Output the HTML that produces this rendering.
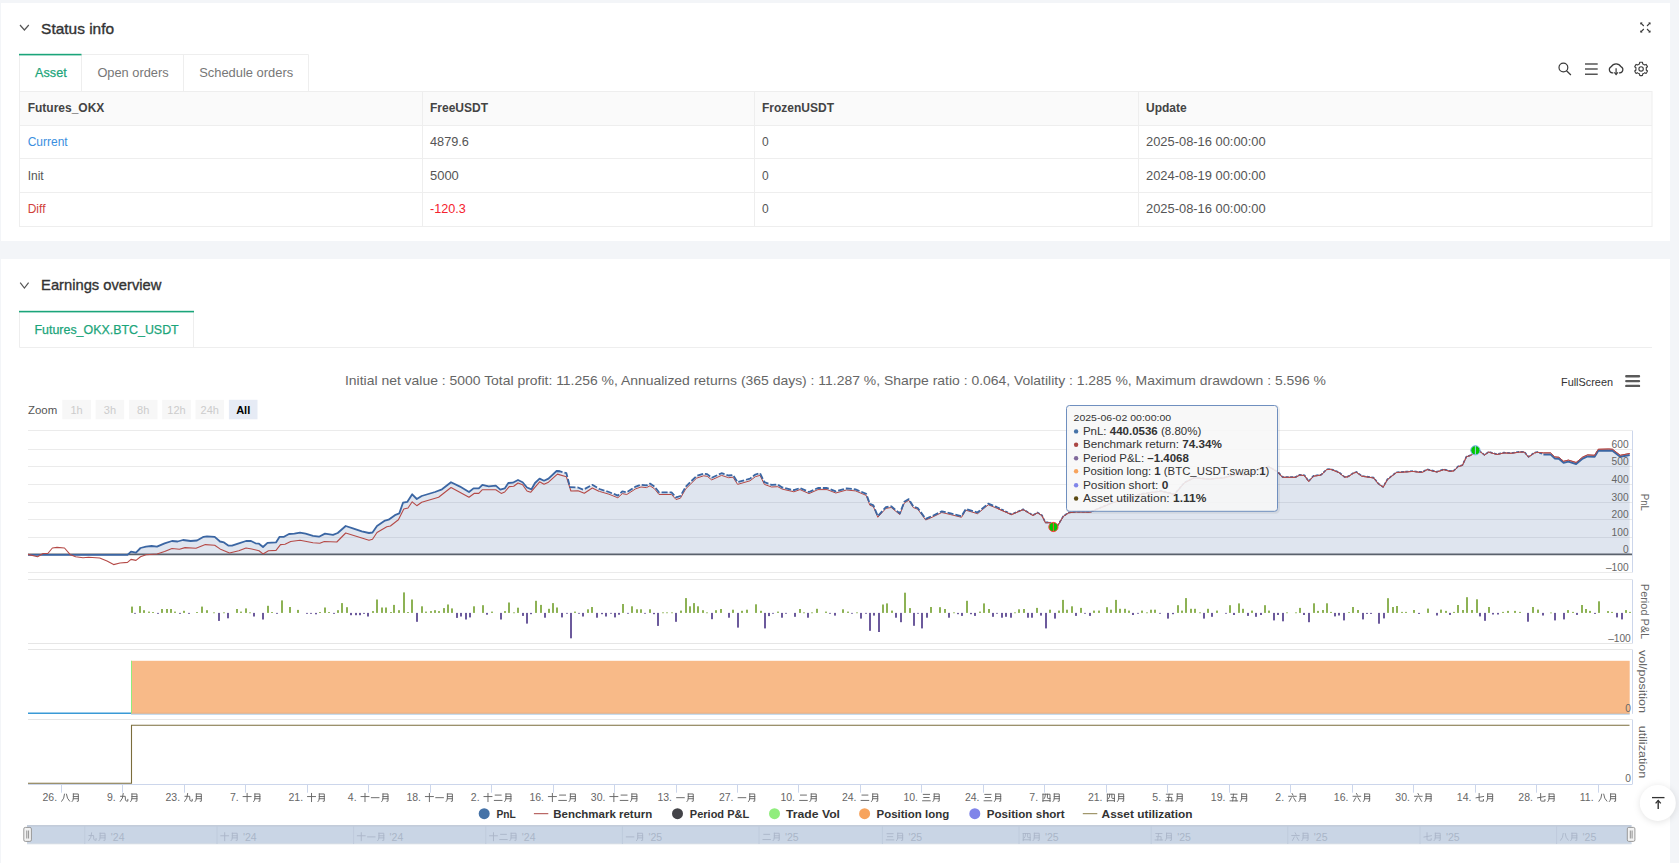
<!DOCTYPE html>
<html><head><meta charset="utf-8"><title>Status</title>
<style>html,body{margin:0;padding:0;width:1679px;height:863px;overflow:hidden;background:#f3f5f8;font-family:'Liberation Sans', sans-serif}</style>
</head><body>
<svg width="1679" height="863" viewBox="0 0 1679 863" style="position:absolute;left:0;top:0;font-family:'Liberation Sans', sans-serif">
<rect x="0" y="0" width="1679" height="863" fill="#f3f5f8"/>
<rect x="1" y="3" width="1669" height="238" fill="#fff"/>
<rect x="1" y="259" width="1669" height="604" fill="#fff"/>
<path d="M20,25 L24.4,30 L28.8,25" fill="none" stroke="#555" stroke-width="1.2"/>
<text x="41.1" y="34.25" font-size="15" fill="#333" font-weight="normal" text-anchor="start" textLength="73" lengthAdjust="spacingAndGlyphs" stroke="#333" stroke-width="0.35">Status info</text>
<g stroke="#3a3a3a" stroke-width="1.1" fill="none"><path d="M1640.8,23 L1643.8,26"/><path d="M1650,23 L1647,26"/><path d="M1640.8,32 L1643.8,29"/><path d="M1650,32 L1647,29"/></g>
<g fill="#3a3a3a"><path d="M1640.2,22.4 L1642.6,22.6 L1640.4,24.8z"/><path d="M1650.6,22.4 L1648.2,22.6 L1650.4,24.8z"/><path d="M1640.2,32.6 L1640.4,30.2 L1642.6,32.4z"/><path d="M1650.6,32.6 L1650.4,30.2 L1648.2,32.4z"/></g>
<g fill="none" stroke="#eeeeee" stroke-width="1"><path d="M19.5,91 V54.5 H308.5 V91"/><path d="M81.5,54.5 V91"/><path d="M183.5,54.5 V91"/></g>
<rect x="19" y="53.8" width="62.5" height="1.6" fill="#1ba57a"/>
<text x="35.1" y="76.8" font-size="13" fill="#1ba57a" font-weight="normal" text-anchor="start" textLength="31.6" lengthAdjust="spacingAndGlyphs" stroke="#1ba57a" stroke-width="0.25">Asset</text>
<text x="97.4" y="76.8" font-size="13" fill="#777" font-weight="normal" text-anchor="start" textLength="71.2" lengthAdjust="spacingAndGlyphs" >Open orders</text>
<text x="199.2" y="76.8" font-size="13" fill="#777" font-weight="normal" text-anchor="start" textLength="94" lengthAdjust="spacingAndGlyphs" >Schedule orders</text>
<g fill="none" stroke="#3a3a3a" stroke-width="1.2"><circle cx="1563.4" cy="67.5" r="4.4"/><path d="M1566.5,70.7 L1570.9,75"/><path d="M1585,64.1 H1597.7 M1585,69.1 H1597.7 M1585,74.2 H1597.7" stroke="#555" stroke-width="1.5"/><path d="M1613.3,72.9 L1612.3,72.9 A3.3,3.3 0 0 1 1611.3,66.6 A5.5,5.5 0 0 1 1620.9,66.6 A3.3,3.3 0 0 1 1619.9,72.9 L1618.9,72.9"/><path d="M1616.1,68.2 V74.3"/><path d="M1614.4,72.3 L1616.1,74.5 L1617.8,72.3"/></g>
<path d="M1641.1,62.2 L1641.8,62.2 L1642.5,62.3 L1642.7,64.0 L1643.2,64.1 L1643.7,64.4 L1644.2,64.7 L1644.6,65.0 L1646.1,64.4 L1646.5,65.0 L1646.9,65.6 L1647.2,66.2 L1647.5,66.8 L1646.2,67.8 L1646.3,68.4 L1646.3,68.9 L1646.3,69.4 L1646.2,70.0 L1647.5,71.0 L1647.2,71.6 L1646.9,72.2 L1646.5,72.8 L1646.1,73.4 L1644.6,72.8 L1644.2,73.1 L1643.7,73.4 L1643.2,73.7 L1642.7,73.8 L1642.5,75.5 L1641.8,75.6 L1641.1,75.6 L1640.4,75.6 L1639.7,75.5 L1639.5,73.8 L1639.0,73.7 L1638.5,73.4 L1638.0,73.1 L1637.6,72.8 L1636.1,73.4 L1635.7,72.8 L1635.3,72.3 L1635.0,71.6 L1634.7,71.0 L1636.0,70.0 L1635.9,69.4 L1635.9,68.9 L1635.9,68.4 L1636.0,67.8 L1634.7,66.8 L1635.0,66.2 L1635.3,65.6 L1635.7,65.0 L1636.1,64.4 L1637.6,65.0 L1638.0,64.7 L1638.5,64.4 L1639.0,64.1 L1639.5,64.0 L1639.7,62.3 L1640.4,62.2Z" fill="none" stroke="#3a3a3a" stroke-width="1.1" stroke-linejoin="round"/>
<circle cx="1641.1" cy="68.9" r="2.2" fill="none" stroke="#3a3a3a" stroke-width="1.1"/>
<rect x="19.5" y="91.5" width="1632.5" height="34" fill="#fafafa"/>
<g stroke="#eeeeee" stroke-width="1" fill="none"><rect x="19.5" y="91.5" width="1632.5" height="135"/><path d="M19.5,125.5 H1652 M19.5,158.5 H1652 M19.5,192.5 H1652"/><path d="M422.5,91.5 V226.5 M754.5,91.5 V226.5 M1138.5,91.5 V226.5"/></g>
<text x="27.7" y="112.4" font-size="12" fill="#444" font-weight="bold" text-anchor="start" >Futures_OKX</text>
<text x="430" y="112.4" font-size="12" fill="#444" font-weight="bold" text-anchor="start" >FreeUSDT</text>
<text x="762" y="112.4" font-size="12" fill="#444" font-weight="bold" text-anchor="start" >FrozenUSDT</text>
<text x="1146" y="112.4" font-size="12" fill="#444" font-weight="bold" text-anchor="start" >Update</text>
<text x="27.7" y="146" font-size="12" fill="#3b8fe0" font-weight="normal" text-anchor="start" >Current</text>
<text x="430" y="146" font-size="12" fill="#555" font-weight="normal" text-anchor="start" textLength="38.9" lengthAdjust="spacingAndGlyphs" >4879.6</text>
<text x="762" y="146" font-size="12" fill="#555" font-weight="normal" text-anchor="start" >0</text>
<text x="1146" y="146" font-size="12" fill="#555" font-weight="normal" text-anchor="start" textLength="119.7" lengthAdjust="spacingAndGlyphs" >2025-08-16 00:00:00</text>
<text x="27.7" y="180" font-size="12" fill="#555" font-weight="normal" text-anchor="start" >Init</text>
<text x="430" y="180" font-size="12" fill="#555" font-weight="normal" text-anchor="start" textLength="28.8" lengthAdjust="spacingAndGlyphs" >5000</text>
<text x="762" y="180" font-size="12" fill="#555" font-weight="normal" text-anchor="start" >0</text>
<text x="1146" y="180" font-size="12" fill="#555" font-weight="normal" text-anchor="start" textLength="119.7" lengthAdjust="spacingAndGlyphs" >2024-08-19 00:00:00</text>
<text x="27.7" y="213.1" font-size="12" fill="#d0413b" font-weight="normal" text-anchor="start" >Diff</text>
<text x="430" y="213.1" font-size="12" fill="#f5222d" font-weight="normal" text-anchor="start" textLength="35.8" lengthAdjust="spacingAndGlyphs" >-120.3</text>
<text x="762" y="213.1" font-size="12" fill="#555" font-weight="normal" text-anchor="start" >0</text>
<text x="1146" y="213.1" font-size="12" fill="#555" font-weight="normal" text-anchor="start" textLength="119.7" lengthAdjust="spacingAndGlyphs" >2025-08-16 00:00:00</text>
<path d="M20.2,282.6 L24.4,288 L28.6,282.6" fill="none" stroke="#555" stroke-width="1.2"/>
<text x="41.1" y="289.7" font-size="15" fill="#333" font-weight="normal" text-anchor="start" textLength="120.3" lengthAdjust="spacingAndGlyphs" stroke="#333" stroke-width="0.35">Earnings overview</text>
<g fill="none" stroke="#eeeeee" stroke-width="1"><path d="M19.5,347.5 V311.5 H193.5 V347.5"/><path d="M19.5,347.5 H1652"/></g>
<rect x="19" y="310.8" width="175" height="1.6" fill="#1ba57a"/>
<text x="34.5" y="334.1" font-size="13" fill="#1ba57a" font-weight="normal" text-anchor="start" textLength="144.2" lengthAdjust="spacingAndGlyphs" stroke="#1ba57a" stroke-width="0.25">Futures_OKX.BTC_USDT</text>
<text x="345" y="385.1" font-size="13" fill="#666" font-weight="normal" text-anchor="start" textLength="981" lengthAdjust="spacingAndGlyphs" >Initial net value : 5000 Total profit: 11.256 %, Annualized returns (365 days) : 11.287 %, Sharpe ratio : 0.064, Volatility : 1.285 %, Maximum drawdown : 5.596 %</text>
<text x="1561" y="386.3" font-size="11.5" fill="#333" font-weight="normal" text-anchor="start" textLength="52" lengthAdjust="spacingAndGlyphs" >FullScreen</text>
<g stroke="#5a5a5a" stroke-width="2.4" stroke-linecap="round"><path d="M1626.3,376.3 H1639 M1626.3,381.1 H1639 M1626.3,385.9 H1639"/></g>
<text x="28" y="413.8" font-size="11.5" fill="#555" font-weight="normal" text-anchor="start" textLength="29.2" lengthAdjust="spacingAndGlyphs" >Zoom</text>
<rect x="62.3" y="399.8" width="28.6" height="19.5" fill="#f7f7f7"/>
<text x="76.6" y="414" font-size="11" fill="#ccc" font-weight="normal" text-anchor="middle" >1h</text>
<rect x="95.6" y="399.8" width="28.6" height="19.5" fill="#f7f7f7"/>
<text x="109.89999999999999" y="414" font-size="11" fill="#ccc" font-weight="normal" text-anchor="middle" >3h</text>
<rect x="128.9" y="399.8" width="28.6" height="19.5" fill="#f7f7f7"/>
<text x="143.20000000000002" y="414" font-size="11" fill="#ccc" font-weight="normal" text-anchor="middle" >8h</text>
<rect x="162.2" y="399.8" width="28.6" height="19.5" fill="#f7f7f7"/>
<text x="176.5" y="414" font-size="11" fill="#ccc" font-weight="normal" text-anchor="middle" >12h</text>
<rect x="195.5" y="399.8" width="28.6" height="19.5" fill="#f7f7f7"/>
<text x="209.8" y="414" font-size="11" fill="#ccc" font-weight="normal" text-anchor="middle" >24h</text>
<rect x="228.9" y="399.8" width="28.6" height="19.5" fill="#e6ebf5"/>
<text x="243.20000000000002" y="414" font-size="11" fill="#000" font-weight="bold" text-anchor="middle" >All</text>
<g stroke="#ebebeb" stroke-width="1">
<path d="M28,449.5 H1632"/>
<path d="M28,466.5 H1632"/>
<path d="M28,484.5 H1632"/>
<path d="M28,502.5 H1632"/>
<path d="M28,519.5 H1632"/>
<path d="M28,537.5 H1632"/>
<path d="M28,572.5 H1632"/>
<path d="M28,430.5 H1632"/>
</g>
<path d="M28.0,554.8 L127.5,554.8 L131.0,551.6 L136.0,552.6 L140.5,548.0 L146.0,546.6 L151.6,546.0 L157.0,546.6 L164.6,543.3 L172.0,541.0 L177.6,541.5 L183.0,540.0 L190.6,541.0 L197.0,540.5 L203.6,536.8 L207.0,536.3 L214.7,536.8 L220.0,541.5 L224.0,542.4 L228.6,545.7 L232.0,545.7 L238.8,543.3 L246.0,541.0 L251.0,541.0 L255.5,543.3 L259.0,543.7 L263.0,547.0 L267.5,542.8 L276.0,542.4 L279.6,536.8 L284.0,536.8 L289.0,534.0 L294.4,533.7 L300.0,532.6 L305.6,533.7 L313.0,535.9 L319.0,536.7 L325.0,533.6 L333.0,534.9 L337.7,533.0 L345.7,526.0 L352.9,528.3 L361.8,531.3 L369.0,533.0 L372.5,532.5 L377.0,526.0 L385.0,520.6 L388.6,519.7 L394.9,515.2 L399.3,513.4 L403.0,502.7 L407.4,501.8 L412.2,494.3 L416.8,499.0 L421.7,496.0 L435.0,492.0 L442.0,489.3 L451.0,482.2 L460.0,486.6 L469.0,492.0 L473.5,488.4 L478.8,488.4 L482.4,484.8 L488.7,486.3 L495.8,485.7 L500.3,489.7 L504.7,488.4 L508.3,483.0 L512.8,482.7 L518.0,480.0 L522.6,482.2 L527.0,487.5 L531.5,489.3 L535.0,483.0 L539.6,478.6 L544.0,480.7 L548.5,478.6 L556.6,471.0 L560.0,471.4 L566.4,473.2 L570.0,487.2 L578.0,487.5 L583.4,489.7 L592.3,484.8 L599.4,489.0 L608.9,492.0 L617.9,495.6 L622.3,491.4 L626.8,492.3 L635.7,486.6 L641.0,484.8 L646.5,485.4 L650.0,483.6 L654.5,486.6 L659.0,492.3 L671.5,492.3 L676.0,497.3 L680.4,496.0 L685.8,486.6 L696.5,476.0 L703.6,473.6 L707.2,474.1 L711.7,477.7 L721.5,473.2 L728.6,475.5 L733.0,475.0 L737.6,482.2 L750.0,478.6 L755.4,474.5 L760.0,473.2 L764.4,482.2 L771.5,484.8 L777.8,484.5 L782.2,487.5 L793.9,490.2 L800.0,488.0 L809.0,492.0 L818.0,488.0 L827.0,488.0 L835.8,491.4 L846.6,488.4 L855.5,489.3 L866.2,493.8 L869.8,503.6 L873.4,505.4 L877.8,516.1 L885.9,507.2 L891.2,506.3 L899.8,513.4 L904.3,501.8 L908.8,499.1 L913.2,506.3 L917.7,508.0 L925.7,518.8 L932.9,515.7 L941.8,511.3 L950.7,513.4 L961.5,516.1 L965.9,509.0 L977.5,512.5 L988.3,503.6 L997.2,507.2 L1011.5,514.3 L1023.1,509.3 L1033.0,515.2 L1037.4,512.5 L1041.9,515.2 L1045.4,522.4 L1049.9,522.4 L1053.5,526.8 L1058.0,525.0 L1063.3,516.1 L1068.7,512.5 L1075.8,511.6 L1090.4,511.8 L1112.3,502.6 L1140.8,494.0 L1161.0,490.8 L1174.5,494.2 L1184.5,482.4 L1194.6,477.4 L1208.0,479.0 L1224.9,477.4 L1236.6,474.0 L1246.7,474.8 L1258.5,469.0 L1268.6,466.4 L1277.7,471.7 L1282.5,477.0 L1295.6,477.0 L1299.8,474.7 L1304.5,475.3 L1308.7,481.2 L1313.5,475.9 L1321.2,474.7 L1326.6,469.3 L1330.8,469.0 L1339.0,472.3 L1344.4,476.8 L1348.0,476.5 L1353.4,472.9 L1356.4,471.9 L1361.7,475.9 L1373.6,477.6 L1378.4,483.6 L1383.2,486.9 L1387.3,479.4 L1396.3,472.3 L1413.0,471.1 L1418.9,471.9 L1422.5,471.9 L1427.2,469.3 L1436.8,471.7 L1443.9,469.3 L1449.9,471.1 L1454.0,470.5 L1458.2,466.3 L1462.4,465.1 L1466.5,456.4 L1471.3,455.0 L1475.5,449.5 L1479.0,450.3 L1484.4,454.8 L1488.6,451.8 L1497.0,454.2 L1504.0,452.6 L1511.2,453.0 L1519.6,451.8 L1524.3,451.8 L1528.5,456.8 L1534.5,452.6 L1537.4,452.0 L1543.4,454.4 L1550.5,454.4 L1554.7,458.4 L1558.9,458.8 L1563.6,462.8 L1568.4,461.6 L1576.1,464.0 L1582.7,458.6 L1587.5,456.4 L1594.6,456.8 L1598.2,450.8 L1608.9,450.5 L1612.5,450.8 L1620.2,456.8 L1629.7,455.0 L1629.7,554.5 L28.0,554.5Z" fill="#c5d0e2" fill-opacity="0.55"/>
<clipPath id="ac"><path d="M28.0,554.8 L127.5,554.8 L131.0,551.6 L136.0,552.6 L140.5,548.0 L146.0,546.6 L151.6,546.0 L157.0,546.6 L164.6,543.3 L172.0,541.0 L177.6,541.5 L183.0,540.0 L190.6,541.0 L197.0,540.5 L203.6,536.8 L207.0,536.3 L214.7,536.8 L220.0,541.5 L224.0,542.4 L228.6,545.7 L232.0,545.7 L238.8,543.3 L246.0,541.0 L251.0,541.0 L255.5,543.3 L259.0,543.7 L263.0,547.0 L267.5,542.8 L276.0,542.4 L279.6,536.8 L284.0,536.8 L289.0,534.0 L294.4,533.7 L300.0,532.6 L305.6,533.7 L313.0,535.9 L319.0,536.7 L325.0,533.6 L333.0,534.9 L337.7,533.0 L345.7,526.0 L352.9,528.3 L361.8,531.3 L369.0,533.0 L372.5,532.5 L377.0,526.0 L385.0,520.6 L388.6,519.7 L394.9,515.2 L399.3,513.4 L403.0,502.7 L407.4,501.8 L412.2,494.3 L416.8,499.0 L421.7,496.0 L435.0,492.0 L442.0,489.3 L451.0,482.2 L460.0,486.6 L469.0,492.0 L473.5,488.4 L478.8,488.4 L482.4,484.8 L488.7,486.3 L495.8,485.7 L500.3,489.7 L504.7,488.4 L508.3,483.0 L512.8,482.7 L518.0,480.0 L522.6,482.2 L527.0,487.5 L531.5,489.3 L535.0,483.0 L539.6,478.6 L544.0,480.7 L548.5,478.6 L556.6,471.0 L560.0,471.4 L566.4,473.2 L570.0,487.2 L578.0,487.5 L583.4,489.7 L592.3,484.8 L599.4,489.0 L608.9,492.0 L617.9,495.6 L622.3,491.4 L626.8,492.3 L635.7,486.6 L641.0,484.8 L646.5,485.4 L650.0,483.6 L654.5,486.6 L659.0,492.3 L671.5,492.3 L676.0,497.3 L680.4,496.0 L685.8,486.6 L696.5,476.0 L703.6,473.6 L707.2,474.1 L711.7,477.7 L721.5,473.2 L728.6,475.5 L733.0,475.0 L737.6,482.2 L750.0,478.6 L755.4,474.5 L760.0,473.2 L764.4,482.2 L771.5,484.8 L777.8,484.5 L782.2,487.5 L793.9,490.2 L800.0,488.0 L809.0,492.0 L818.0,488.0 L827.0,488.0 L835.8,491.4 L846.6,488.4 L855.5,489.3 L866.2,493.8 L869.8,503.6 L873.4,505.4 L877.8,516.1 L885.9,507.2 L891.2,506.3 L899.8,513.4 L904.3,501.8 L908.8,499.1 L913.2,506.3 L917.7,508.0 L925.7,518.8 L932.9,515.7 L941.8,511.3 L950.7,513.4 L961.5,516.1 L965.9,509.0 L977.5,512.5 L988.3,503.6 L997.2,507.2 L1011.5,514.3 L1023.1,509.3 L1033.0,515.2 L1037.4,512.5 L1041.9,515.2 L1045.4,522.4 L1049.9,522.4 L1053.5,526.8 L1058.0,525.0 L1063.3,516.1 L1068.7,512.5 L1075.8,511.6 L1090.4,511.8 L1112.3,502.6 L1140.8,494.0 L1161.0,490.8 L1174.5,494.2 L1184.5,482.4 L1194.6,477.4 L1208.0,479.0 L1224.9,477.4 L1236.6,474.0 L1246.7,474.8 L1258.5,469.0 L1268.6,466.4 L1277.7,471.7 L1282.5,477.0 L1295.6,477.0 L1299.8,474.7 L1304.5,475.3 L1308.7,481.2 L1313.5,475.9 L1321.2,474.7 L1326.6,469.3 L1330.8,469.0 L1339.0,472.3 L1344.4,476.8 L1348.0,476.5 L1353.4,472.9 L1356.4,471.9 L1361.7,475.9 L1373.6,477.6 L1378.4,483.6 L1383.2,486.9 L1387.3,479.4 L1396.3,472.3 L1413.0,471.1 L1418.9,471.9 L1422.5,471.9 L1427.2,469.3 L1436.8,471.7 L1443.9,469.3 L1449.9,471.1 L1454.0,470.5 L1458.2,466.3 L1462.4,465.1 L1466.5,456.4 L1471.3,455.0 L1475.5,449.5 L1479.0,450.3 L1484.4,454.8 L1488.6,451.8 L1497.0,454.2 L1504.0,452.6 L1511.2,453.0 L1519.6,451.8 L1524.3,451.8 L1528.5,456.8 L1534.5,452.6 L1537.4,452.0 L1543.4,454.4 L1550.5,454.4 L1554.7,458.4 L1558.9,458.8 L1563.6,462.8 L1568.4,461.6 L1576.1,464.0 L1582.7,458.6 L1587.5,456.4 L1594.6,456.8 L1598.2,450.8 L1608.9,450.5 L1612.5,450.8 L1620.2,456.8 L1629.7,455.0 L1629.7,554.5 L28.0,554.5Z"/></clipPath>
<g stroke="#c8cfdb" stroke-width="1" stroke-opacity="0.6" clip-path="url(#ac)">
<path d="M28,466.5 H1630"/>
<path d="M28,484.5 H1630"/>
<path d="M28,502.5 H1630"/>
<path d="M28,519.5 H1630"/>
<path d="M28,537.5 H1630"/>
</g>
<path d="M28,554.3 H1632" stroke="#5a616c" stroke-width="1.7"/>
<path d="M599.4,491.4 L608.9,494.2 L617.9,497.8 L622.3,493.6 L626.8,494.5 L635.7,488.8 L641.0,487.0 L646.5,487.6 L650.0,485.8 L654.5,488.8 L659.0,494.5 L671.5,494.5 L676.0,499.5 L680.4,498.2 L685.8,488.8 L696.5,478.2 L703.6,475.8 L707.2,476.3 L711.7,479.9 L721.5,475.4 L728.6,477.7 L733.0,477.2 L737.6,484.4 L750.0,480.8 L755.4,476.7 L760.0,475.4 L764.4,484.4 L771.5,487.0 L777.8,486.7 L782.2,489.1 L793.9,491.8 L800.0,489.6 L809.0,493.6 L818.0,489.6 L827.0,489.6 L835.8,493.0 L846.6,490.0 L855.5,490.9 L866.2,495.4 L869.8,505.2 L873.4,506.6 L877.8,517.3 L885.9,508.4 L891.2,507.5 L899.8,514.6 L904.3,503.0 L908.8,500.3 L913.2,507.5 L917.7,509.2 L925.7,520.0 L932.9,516.9 L941.8,512.5 L950.7,514.6 L961.5,517.3 L965.9,510.2 L977.5,513.7 L988.3,504.8 L997.2,508.4 L1011.5,514.6 L1023.1,509.6 L1033.0,515.5 L1037.4,512.8 L1041.9,515.5 L1045.4,522.7 L1049.9,522.7 L1053.5,527.1 L1058.0,525.3 L1063.3,516.4 L1068.7,512.8 L1075.8,511.9 L1090.4,512.1 L1112.3,502.9 L1140.8,494.3 L1161.0,491.1 L1174.5,494.5 L1184.5,482.7 L1194.6,477.7 L1208.0,479.3 L1224.9,477.7 L1236.6,474.3 L1246.7,475.1 L1258.5,469.3 L1268.6,466.7 L1277.7,472.0 L1282.5,477.3 L1295.6,477.3 L1299.8,475.0 L1304.5,475.6 L1308.7,481.5 L1313.5,476.2 L1321.2,475.0 L1326.6,469.6 L1330.8,469.3 L1339.0,472.6 L1344.4,477.1 L1348.0,476.8 L1353.4,473.2 L1356.4,472.2 L1361.7,476.2 L1373.6,477.9 L1378.4,483.9 L1383.2,487.2 L1387.3,479.7 L1396.3,472.6 L1413.0,471.4 L1418.9,472.2 L1422.5,472.2 L1427.2,469.6 L1436.8,472.0 L1443.9,469.6 L1449.9,471.4 L1454.0,470.8 L1458.2,466.6 L1462.4,465.4 L1466.5,456.7 L1471.3,455.3 L1475.5,449.8 L1479.0,450.6 L1484.4,455.1 L1488.6,452.1 L1497.0,454.5 L1504.0,452.9 L1511.2,453.3 L1519.6,452.1 L1524.3,452.1 L1528.5,457.1 L1534.5,452.9 L1537.4,452.3 L1543.4,452.9 L1550.5,452.9 L1554.7,456.9 L1558.9,457.3 L1563.6,461.3 L1568.4,460.1 L1576.1,462.5 L1582.7,457.1 L1587.5,454.9 L1594.6,455.3 L1598.2,449.3 L1608.9,449.0 L1612.5,449.3 L1620.2,455.3 L1629.7,453.5" fill="none" stroke="#b54a47" stroke-width="1" stroke-linejoin="round"/>
<path d="M28.0,554.8 L127.5,554.8 L131.0,551.6 L136.0,552.6 L140.5,548.0 L146.0,546.6 L151.6,546.0 L157.0,546.6 L164.6,543.3 L172.0,541.0 L177.6,541.5 L183.0,540.0 L190.6,541.0 L197.0,540.5 L203.6,536.8 L207.0,536.3 L214.7,536.8 L220.0,541.5 L224.0,542.4 L228.6,545.7 L232.0,545.7 L238.8,543.3 L246.0,541.0 L251.0,541.0 L255.5,543.3 L259.0,543.7 L263.0,547.0 L267.5,542.8 L276.0,542.4 L279.6,536.8 L284.0,536.8 L289.0,534.0 L294.4,533.7 L300.0,532.6 L305.6,533.7 L313.0,535.9 L319.0,536.7 L325.0,533.6 L333.0,534.9 L337.7,533.0 L345.7,526.0 L352.9,528.3 L361.8,531.3 L369.0,533.0 L372.5,532.5 L377.0,526.0 L385.0,520.6 L388.6,519.7 L394.9,515.2 L399.3,513.4 L403.0,502.7 L407.4,501.8 L412.2,494.3 L416.8,499.0 L421.7,496.0 L435.0,492.0 L442.0,489.3 L451.0,482.2 L460.0,486.6 L469.0,492.0 L473.5,488.4 L478.8,488.4 L482.4,484.8 L488.7,486.3 L495.8,485.7 L500.3,489.7 L504.7,488.4 L508.3,483.0 L512.8,482.7 L518.0,480.0 L522.6,482.2 L527.0,487.5 L531.5,489.3 L535.0,483.0 L539.6,478.6 L544.0,480.7 L548.5,478.6 L556.6,471.0 L560.0,471.4" fill="none" stroke="#3b66a3" stroke-width="1.8" stroke-linejoin="round"/>
<path d="M28.0,554.4 L37.6,556.7 L43.0,553.5 L47.8,553.5 L52.4,548.0 L57.0,547.4 L64.5,548.0 L70.0,554.4 L75.6,556.7 L83.0,557.8 L88.6,557.2 L99.7,558.0 L107.0,561.0 L113.6,564.6 L120.0,563.0 L127.5,562.4 L131.0,559.4 L136.0,560.4 L140.5,556.8 L146.0,554.8 L157.0,554.0 L164.6,551.6 L172.0,548.5 L179.5,549.2 L185.0,547.6 L196.0,548.3 L205.4,544.6 L214.7,545.2 L220.0,548.9 L229.5,553.0 L238.8,550.7 L246.0,548.0 L251.8,549.0 L259.0,550.7 L263.0,553.9 L268.5,550.7 L276.0,550.4 L280.5,544.6 L285.0,544.2 L290.7,541.5 L300.0,540.2 L313.0,542.8 L319.8,543.3 L324.3,541.5 L336.8,542.0 L345.7,533.0 L369.0,540.2 L372.5,539.3 L377.0,532.5 L386.8,526.8 L390.4,526.0 L398.4,519.7 L403.8,509.0 L408.0,508.0 L412.2,501.8 L416.8,505.7 L421.7,502.2 L438.6,497.3 L451.0,487.5 L469.0,497.3 L474.4,493.2 L478.8,493.4 L482.4,489.7 L495.8,489.7 L501.2,493.4 L504.7,492.0 L509.2,486.6 L513.7,486.3 L518.0,483.0 L522.6,484.8 L527.0,491.0 L530.6,492.3 L539.6,481.8 L544.0,484.3 L548.5,482.2 L557.4,474.1 L566.4,476.8 L570.9,491.0 L578.0,490.7 L584.3,493.2 L592.3,488.0 L599.4,491.4" fill="none" stroke="#b54a47" stroke-width="1.1" stroke-linejoin="round"/>
<path d="M556.6,471.0 L560.0,471.4 L566.4,473.2 L570.0,487.2 L578.0,487.5 L583.4,489.7 L592.3,484.8 L599.4,489.0 L608.9,492.0 L617.9,495.6 L622.3,491.4 L626.8,492.3 L635.7,486.6 L641.0,484.8 L646.5,485.4 L650.0,483.6 L654.5,486.6 L659.0,492.3 L671.5,492.3 L676.0,497.3 L680.4,496.0 L685.8,486.6 L696.5,476.0 L703.6,473.6 L707.2,474.1 L711.7,477.7 L721.5,473.2 L728.6,475.5 L733.0,475.0 L737.6,482.2 L750.0,478.6 L755.4,474.5 L760.0,473.2 L764.4,482.2 L771.5,484.8 L777.8,484.5 L782.2,487.5 L793.9,490.2 L800.0,488.0 L809.0,492.0 L818.0,488.0 L827.0,488.0 L835.8,491.4 L846.6,488.4 L855.5,489.3 L866.2,493.8 L869.8,503.6 L873.4,505.4 L877.8,516.1 L885.9,507.2 L891.2,506.3 L899.8,513.4 L904.3,501.8 L908.8,499.1 L913.2,506.3 L917.7,508.0 L925.7,518.8 L932.9,515.7 L941.8,511.3 L950.7,513.4 L961.5,516.1 L965.9,509.0 L977.5,512.5 L988.3,503.6 L997.2,507.2" fill="none" stroke="#3b66a3" stroke-width="1.8" stroke-dasharray="6,2" stroke-linejoin="round"/>
<path d="M997.2,507.2 L1011.5,514.3 L1023.1,509.3 L1033.0,515.2 L1037.4,512.5 L1041.9,515.2 L1045.4,522.4 L1049.9,522.4 L1053.5,526.8 L1058.0,525.0 L1063.3,516.1 L1068.7,512.5 L1075.8,511.6 L1090.4,511.8 L1112.3,502.6 L1140.8,494.0 L1161.0,490.8 L1174.5,494.2 L1184.5,482.4 L1194.6,477.4 L1208.0,479.0 L1224.9,477.4 L1236.6,474.0 L1246.7,474.8 L1258.5,469.0 L1268.6,466.4 L1277.7,471.7 L1282.5,477.0 L1295.6,477.0 L1299.8,474.7 L1304.5,475.3 L1308.7,481.2 L1313.5,475.9 L1321.2,474.7 L1326.6,469.3 L1330.8,469.0 L1339.0,472.3 L1344.4,476.8 L1348.0,476.5 L1353.4,472.9 L1356.4,471.9 L1361.7,475.9 L1373.6,477.6 L1378.4,483.6 L1383.2,486.9 L1387.3,479.4 L1396.3,472.3 L1413.0,471.1 L1418.9,471.9 L1422.5,471.9 L1427.2,469.3 L1436.8,471.7 L1443.9,469.3 L1449.9,471.1 L1454.0,470.5 L1458.2,466.3 L1462.4,465.1 L1466.5,456.4 L1471.3,455.0 L1475.5,449.5 L1479.0,450.3 L1484.4,454.8 L1488.6,451.8 L1497.0,454.2 L1504.0,452.6 L1511.2,453.0 L1519.6,451.8 L1524.3,451.8 L1528.5,456.8 L1534.5,452.6 L1537.4,452.0 L1543.4,454.4" fill="none" stroke="#3b66a3" stroke-width="1.6" stroke-dasharray="3,1.5" stroke-linejoin="round"/>
<path d="M1543.4,454.4 L1550.5,454.4 L1554.7,458.4 L1558.9,458.8 L1563.6,462.8 L1568.4,461.6 L1576.1,464.0 L1582.7,458.6 L1587.5,456.4 L1594.6,456.8 L1598.2,450.8 L1608.9,450.5 L1612.5,450.8 L1620.2,456.8 L1629.7,455.0" fill="none" stroke="#3b66a3" stroke-width="2" stroke-linejoin="round"/>
<path d="M997.2,508.4 L1011.5,514.6 L1023.1,509.6 L1033.0,515.5 L1037.4,512.8 L1041.9,515.5 L1045.4,522.7 L1049.9,522.7 L1053.5,527.1 L1058.0,525.3 L1063.3,516.4 L1068.7,512.8 L1075.8,511.9 L1090.4,512.1 L1112.3,502.9 L1140.8,494.3 L1161.0,491.1 L1174.5,494.5 L1184.5,482.7 L1194.6,477.7 L1208.0,479.3 L1224.9,477.7 L1236.6,474.3 L1246.7,475.1 L1258.5,469.3 L1268.6,466.7 L1277.7,472.0 L1282.5,477.3 L1295.6,477.3 L1299.8,475.0 L1304.5,475.6 L1308.7,481.5 L1313.5,476.2 L1321.2,475.0 L1326.6,469.6 L1330.8,469.3 L1339.0,472.6 L1344.4,477.1 L1348.0,476.8 L1353.4,473.2 L1356.4,472.2 L1361.7,476.2 L1373.6,477.9 L1378.4,483.9 L1383.2,487.2 L1387.3,479.7 L1396.3,472.6 L1413.0,471.4 L1418.9,472.2 L1422.5,472.2 L1427.2,469.6 L1436.8,472.0 L1443.9,469.6 L1449.9,471.4 L1454.0,470.8 L1458.2,466.6 L1462.4,465.4 L1466.5,456.7 L1471.3,455.3 L1475.5,449.8 L1479.0,450.6 L1484.4,455.1 L1488.6,452.1 L1497.0,454.5 L1504.0,452.9 L1511.2,453.3 L1519.6,452.1 L1524.3,452.1 L1528.5,457.1 L1534.5,452.9 L1537.4,452.3 L1543.4,452.9 L1550.5,452.9 L1554.7,456.9 L1558.9,457.3 L1563.6,461.3 L1568.4,460.1 L1576.1,462.5 L1582.7,457.1 L1587.5,454.9 L1594.6,455.3 L1598.2,449.3 L1608.9,449.0 L1612.5,449.3 L1620.2,455.3 L1629.7,453.5" fill="none" stroke="#b54a47" stroke-width="1" stroke-linejoin="round"/>
<path d="M1632.5,430.5 V572.5" stroke="#ccd6eb" stroke-width="1"/>
<text x="1628.6" y="447.5" font-size="10.2" fill="#666" font-weight="normal" text-anchor="end" >600</text>
<text x="1628.6" y="464.5" font-size="10.2" fill="#666" font-weight="normal" text-anchor="end" >500</text>
<text x="1628.6" y="482.5" font-size="10.2" fill="#666" font-weight="normal" text-anchor="end" >400</text>
<text x="1628.6" y="500.5" font-size="10.2" fill="#666" font-weight="normal" text-anchor="end" >300</text>
<text x="1628.6" y="517.5" font-size="10.2" fill="#666" font-weight="normal" text-anchor="end" >200</text>
<text x="1628.6" y="535.5" font-size="10.2" fill="#666" font-weight="normal" text-anchor="end" >100</text>
<text x="1628.6" y="552.5" font-size="10.2" fill="#666" font-weight="normal" text-anchor="end" >0</text>
<text x="1628.6" y="570.5" font-size="10.2" fill="#666" font-weight="normal" text-anchor="end" >&#8211;100</text>
<text transform="translate(1641.3,502.3) rotate(90)" font-size="10.3" fill="#666" text-anchor="middle" textLength="17.2" lengthAdjust="spacingAndGlyphs">PnL</text>
<circle cx="1053.4" cy="527" r="4.6" fill="#00c800" stroke="#ff4040" stroke-width="1"/><path d="M1053.4,522.5 V531.5" stroke="#ff4040" stroke-width="1"/>
<circle cx="1475.4" cy="450.3" r="4.6" fill="#00c800" stroke="#7fb2f0" stroke-width="1"/><path d="M1475.4,446 V454.8" stroke="#9fd0f0" stroke-width="1"/>
<path d="M28,579.5 H1632 M28,643.5 H1632" stroke="#e6e6e6" stroke-width="1"/>
<path d="M1632.5,579.5 V643.5" stroke="#ccd6eb" stroke-width="1"/>
<g>
<rect x="131" y="606.6" width="2" height="6.3" fill="#8db255"/>
<rect x="134" y="612.9" width="2" height="0.8" fill="#6c5a9c"/>
<rect x="139" y="606.1" width="2" height="6.8" fill="#8db255"/>
<rect x="143" y="610.2" width="2" height="2.7" fill="#8db255"/>
<rect x="148" y="611.6" width="2" height="1.3" fill="#8db255"/>
<rect x="152" y="612.0" width="2" height="0.9" fill="#8db255"/>
<rect x="157" y="612.9" width="2" height="0.9" fill="#6c5a9c"/>
<rect x="161" y="609.0" width="2" height="3.9" fill="#8db255"/>
<rect x="166" y="609.0" width="2" height="3.9" fill="#8db255"/>
<rect x="170" y="609.0" width="2" height="3.9" fill="#8db255"/>
<rect x="174" y="611.6" width="2" height="1.3" fill="#8db255"/>
<rect x="179" y="612.9" width="2" height="0.9" fill="#6c5a9c"/>
<rect x="183" y="610.8" width="2" height="2.1" fill="#8db255"/>
<rect x="188" y="612.9" width="2" height="0.9" fill="#6c5a9c"/>
<rect x="196" y="612.0" width="2" height="0.9" fill="#8db255"/>
<rect x="201" y="606.6" width="2" height="6.3" fill="#8db255"/>
<rect x="206" y="610.2" width="2" height="2.7" fill="#8db255"/>
<rect x="213" y="612.4" width="2" height="0.8" fill="#8db255"/>
<rect x="218" y="612.9" width="2" height="8.0" fill="#6c5a9c"/>
<rect x="223" y="612.4" width="2" height="0.8" fill="#8db255"/>
<rect x="227" y="612.9" width="2" height="5.4" fill="#6c5a9c"/>
<rect x="236" y="609.0" width="2" height="3.9" fill="#8db255"/>
<rect x="240" y="611.6" width="2" height="1.3" fill="#8db255"/>
<rect x="245" y="608.4" width="2" height="4.5" fill="#8db255"/>
<rect x="249" y="612.4" width="2" height="0.8" fill="#8db255"/>
<rect x="253" y="612.9" width="2" height="3.6" fill="#6c5a9c"/>
<rect x="262" y="612.9" width="2" height="6.6" fill="#6c5a9c"/>
<rect x="267" y="605.8" width="2" height="7.1" fill="#8db255"/>
<rect x="271" y="612.0" width="2" height="0.9" fill="#8db255"/>
<rect x="276" y="612.9" width="2" height="0.9" fill="#6c5a9c"/>
<rect x="281" y="600.4" width="2" height="12.5" fill="#8db255"/>
<rect x="289" y="607.0" width="2" height="5.9" fill="#8db255"/>
<rect x="297" y="609.9" width="2" height="3.0" fill="#8db255"/>
<rect x="306" y="612.9" width="2" height="0.9" fill="#6c5a9c"/>
<rect x="310" y="612.9" width="2" height="0.9" fill="#6c5a9c"/>
<rect x="315" y="612.9" width="2" height="1.4" fill="#6c5a9c"/>
<rect x="319" y="612.0" width="2" height="0.9" fill="#8db255"/>
<rect x="324" y="607.5" width="2" height="5.4" fill="#8db255"/>
<rect x="328" y="612.0" width="2" height="0.9" fill="#8db255"/>
<rect x="333" y="612.9" width="2" height="0.9" fill="#6c5a9c"/>
<rect x="337" y="610.2" width="2" height="2.7" fill="#8db255"/>
<rect x="341" y="603.1" width="2" height="9.8" fill="#8db255"/>
<rect x="346" y="607.2" width="2" height="5.7" fill="#8db255"/>
<rect x="350" y="612.9" width="2" height="2.3" fill="#6c5a9c"/>
<rect x="355" y="612.9" width="2" height="2.3" fill="#6c5a9c"/>
<rect x="359" y="612.9" width="2" height="2.3" fill="#6c5a9c"/>
<rect x="363" y="612.9" width="2" height="0.9" fill="#6c5a9c"/>
<rect x="367" y="612.9" width="2" height="3.6" fill="#6c5a9c"/>
<rect x="372" y="611.1" width="2" height="1.8" fill="#8db255"/>
<rect x="376" y="599.5" width="2" height="13.4" fill="#8db255"/>
<rect x="381" y="607.5" width="2" height="5.4" fill="#8db255"/>
<rect x="385" y="607.5" width="2" height="5.4" fill="#8db255"/>
<rect x="390" y="612.0" width="2" height="0.9" fill="#8db255"/>
<rect x="393" y="604.9" width="2" height="8.0" fill="#8db255"/>
<rect x="398" y="610.2" width="2" height="2.7" fill="#8db255"/>
<rect x="403" y="592.4" width="2" height="20.5" fill="#8db255"/>
<rect x="407" y="612.0" width="2" height="0.9" fill="#8db255"/>
<rect x="411" y="599.5" width="2" height="13.4" fill="#8db255"/>
<rect x="416" y="612.9" width="2" height="8.9" fill="#6c5a9c"/>
<rect x="421" y="606.3" width="2" height="6.6" fill="#8db255"/>
<rect x="425" y="611.6" width="2" height="1.3" fill="#8db255"/>
<rect x="430" y="611.1" width="2" height="1.8" fill="#8db255"/>
<rect x="434" y="610.2" width="2" height="2.7" fill="#8db255"/>
<rect x="438" y="611.1" width="2" height="1.8" fill="#8db255"/>
<rect x="443" y="608.1" width="2" height="4.8" fill="#8db255"/>
<rect x="447" y="604.5" width="2" height="8.4" fill="#8db255"/>
<rect x="451" y="608.4" width="2" height="4.5" fill="#8db255"/>
<rect x="456" y="612.9" width="2" height="5.0" fill="#6c5a9c"/>
<rect x="460" y="612.9" width="2" height="3.6" fill="#6c5a9c"/>
<rect x="465" y="612.9" width="2" height="6.6" fill="#6c5a9c"/>
<rect x="469" y="612.9" width="2" height="4.5" fill="#6c5a9c"/>
<rect x="473" y="606.3" width="2" height="6.6" fill="#8db255"/>
<rect x="482" y="605.2" width="2" height="7.7" fill="#8db255"/>
<rect x="486" y="612.9" width="2" height="1.8" fill="#6c5a9c"/>
<rect x="491" y="611.6" width="2" height="1.3" fill="#8db255"/>
<rect x="500" y="612.9" width="2" height="6.6" fill="#6c5a9c"/>
<rect x="504" y="611.1" width="2" height="1.8" fill="#8db255"/>
<rect x="508" y="602.5" width="2" height="10.4" fill="#8db255"/>
<rect x="513" y="612.4" width="2" height="0.8" fill="#8db255"/>
<rect x="517" y="607.7" width="2" height="5.2" fill="#8db255"/>
<rect x="522" y="612.9" width="2" height="3.0" fill="#6c5a9c"/>
<rect x="526" y="612.9" width="2" height="10.7" fill="#6c5a9c"/>
<rect x="530" y="612.9" width="2" height="1.3" fill="#6c5a9c"/>
<rect x="535" y="600.8" width="2" height="12.1" fill="#8db255"/>
<rect x="540" y="604.9" width="2" height="8.0" fill="#8db255"/>
<rect x="544" y="612.9" width="2" height="4.8" fill="#6c5a9c"/>
<rect x="548" y="608.8" width="2" height="4.1" fill="#8db255"/>
<rect x="552" y="603.1" width="2" height="9.8" fill="#8db255"/>
<rect x="556" y="607.5" width="2" height="5.4" fill="#8db255"/>
<rect x="561" y="612.9" width="2" height="4.5" fill="#6c5a9c"/>
<rect x="566" y="612.9" width="2" height="0.8" fill="#6c5a9c"/>
<rect x="570" y="612.9" width="2" height="25.4" fill="#6c5a9c"/>
<rect x="574" y="611.6" width="2" height="1.3" fill="#8db255"/>
<rect x="578" y="612.9" width="2" height="0.8" fill="#6c5a9c"/>
<rect x="582" y="612.9" width="2" height="3.6" fill="#6c5a9c"/>
<rect x="587" y="609.3" width="2" height="3.6" fill="#8db255"/>
<rect x="591" y="607.0" width="2" height="5.9" fill="#8db255"/>
<rect x="596" y="612.9" width="2" height="4.8" fill="#6c5a9c"/>
<rect x="601" y="612.9" width="2" height="1.3" fill="#6c5a9c"/>
<rect x="605" y="612.9" width="2" height="3.6" fill="#6c5a9c"/>
<rect x="610" y="612.9" width="2" height="0.8" fill="#6c5a9c"/>
<rect x="614" y="612.9" width="2" height="4.5" fill="#6c5a9c"/>
<rect x="618" y="612.9" width="2" height="1.8" fill="#6c5a9c"/>
<rect x="622" y="604.0" width="2" height="8.9" fill="#8db255"/>
<rect x="627" y="612.9" width="2" height="0.8" fill="#6c5a9c"/>
<rect x="631" y="606.3" width="2" height="6.6" fill="#8db255"/>
<rect x="636" y="609.3" width="2" height="3.6" fill="#8db255"/>
<rect x="640" y="609.3" width="2" height="3.6" fill="#8db255"/>
<rect x="644" y="612.9" width="2" height="0.8" fill="#6c5a9c"/>
<rect x="649" y="609.3" width="2" height="3.6" fill="#8db255"/>
<rect x="653" y="612.9" width="2" height="1.3" fill="#6c5a9c"/>
<rect x="657" y="612.9" width="2" height="13.0" fill="#6c5a9c"/>
<rect x="662" y="612.4" width="2" height="0.8" fill="#8db255"/>
<rect x="666" y="612.4" width="2" height="0.8" fill="#8db255"/>
<rect x="671" y="612.4" width="2" height="0.8" fill="#8db255"/>
<rect x="675" y="612.9" width="2" height="8.9" fill="#6c5a9c"/>
<rect x="680" y="610.6" width="2" height="2.3" fill="#8db255"/>
<rect x="685" y="598.1" width="2" height="14.8" fill="#8db255"/>
<rect x="689" y="606.3" width="2" height="6.6" fill="#8db255"/>
<rect x="693" y="603.1" width="2" height="9.8" fill="#8db255"/>
<rect x="697" y="606.3" width="2" height="6.6" fill="#8db255"/>
<rect x="702" y="610.2" width="2" height="2.7" fill="#8db255"/>
<rect x="706" y="612.4" width="2" height="0.8" fill="#8db255"/>
<rect x="711" y="612.9" width="2" height="6.3" fill="#6c5a9c"/>
<rect x="715" y="610.2" width="2" height="2.7" fill="#8db255"/>
<rect x="720" y="609.0" width="2" height="3.9" fill="#8db255"/>
<rect x="728" y="612.9" width="2" height="4.8" fill="#6c5a9c"/>
<rect x="732" y="609.7" width="2" height="3.2" fill="#8db255"/>
<rect x="737" y="612.9" width="2" height="14.7" fill="#6c5a9c"/>
<rect x="741" y="610.8" width="2" height="2.1" fill="#8db255"/>
<rect x="746" y="609.7" width="2" height="3.2" fill="#8db255"/>
<rect x="755" y="604.3" width="2" height="8.6" fill="#8db255"/>
<rect x="760" y="610.8" width="2" height="2.1" fill="#8db255"/>
<rect x="764" y="612.9" width="2" height="15.5" fill="#6c5a9c"/>
<rect x="768" y="612.9" width="2" height="3.2" fill="#6c5a9c"/>
<rect x="772" y="612.9" width="2" height="0.8" fill="#6c5a9c"/>
<rect x="777" y="611.6" width="2" height="1.3" fill="#8db255"/>
<rect x="781" y="612.9" width="2" height="4.8" fill="#6c5a9c"/>
<rect x="785" y="612.9" width="2" height="0.8" fill="#6c5a9c"/>
<rect x="794" y="612.9" width="2" height="3.9" fill="#6c5a9c"/>
<rect x="799" y="609.0" width="2" height="3.9" fill="#8db255"/>
<rect x="803" y="612.4" width="2" height="0.8" fill="#8db255"/>
<rect x="807" y="612.9" width="2" height="4.8" fill="#6c5a9c"/>
<rect x="811" y="612.4" width="2" height="0.8" fill="#8db255"/>
<rect x="816" y="608.8" width="2" height="4.1" fill="#8db255"/>
<rect x="825" y="611.6" width="2" height="1.3" fill="#8db255"/>
<rect x="829" y="612.9" width="2" height="0.8" fill="#6c5a9c"/>
<rect x="834" y="612.9" width="2" height="2.7" fill="#6c5a9c"/>
<rect x="842" y="609.3" width="2" height="3.6" fill="#8db255"/>
<rect x="847" y="611.6" width="2" height="1.3" fill="#8db255"/>
<rect x="851" y="612.9" width="2" height="0.8" fill="#6c5a9c"/>
<rect x="856" y="612.4" width="2" height="0.8" fill="#8db255"/>
<rect x="860" y="612.9" width="2" height="5.7" fill="#6c5a9c"/>
<rect x="865" y="612.9" width="2" height="0.8" fill="#6c5a9c"/>
<rect x="869" y="612.9" width="2" height="17.9" fill="#6c5a9c"/>
<rect x="873" y="612.9" width="2" height="2.7" fill="#6c5a9c"/>
<rect x="878" y="612.9" width="2" height="19.1" fill="#6c5a9c"/>
<rect x="882" y="604.5" width="2" height="8.4" fill="#8db255"/>
<rect x="886" y="603.4" width="2" height="9.5" fill="#8db255"/>
<rect x="891" y="610.6" width="2" height="2.3" fill="#8db255"/>
<rect x="895" y="612.9" width="2" height="4.8" fill="#6c5a9c"/>
<rect x="900" y="612.9" width="2" height="9.3" fill="#6c5a9c"/>
<rect x="904" y="592.7" width="2" height="20.2" fill="#8db255"/>
<rect x="909" y="608.1" width="2" height="4.8" fill="#8db255"/>
<rect x="913" y="612.9" width="2" height="12.9" fill="#6c5a9c"/>
<rect x="917" y="612.9" width="2" height="0.8" fill="#6c5a9c"/>
<rect x="921" y="612.9" width="2" height="15.5" fill="#6c5a9c"/>
<rect x="926" y="612.9" width="2" height="4.8" fill="#6c5a9c"/>
<rect x="930" y="607.0" width="2" height="5.9" fill="#8db255"/>
<rect x="939" y="607.2" width="2" height="5.7" fill="#8db255"/>
<rect x="944" y="609.0" width="2" height="3.9" fill="#8db255"/>
<rect x="948" y="612.9" width="2" height="4.8" fill="#6c5a9c"/>
<rect x="953" y="612.4" width="2" height="0.8" fill="#8db255"/>
<rect x="957" y="612.9" width="2" height="1.3" fill="#6c5a9c"/>
<rect x="961" y="612.9" width="2" height="3.0" fill="#6c5a9c"/>
<rect x="966" y="600.8" width="2" height="12.1" fill="#8db255"/>
<rect x="970" y="612.9" width="2" height="1.3" fill="#6c5a9c"/>
<rect x="974" y="612.9" width="2" height="3.0" fill="#6c5a9c"/>
<rect x="979" y="611.6" width="2" height="1.3" fill="#8db255"/>
<rect x="983" y="603.4" width="2" height="9.5" fill="#8db255"/>
<rect x="988" y="609.0" width="2" height="3.9" fill="#8db255"/>
<rect x="992" y="612.9" width="2" height="3.9" fill="#6c5a9c"/>
<rect x="996" y="612.9" width="2" height="0.8" fill="#6c5a9c"/>
<rect x="1001" y="612.9" width="2" height="4.8" fill="#6c5a9c"/>
<rect x="1005" y="612.9" width="2" height="3.9" fill="#6c5a9c"/>
<rect x="1010" y="612.9" width="2" height="4.8" fill="#6c5a9c"/>
<rect x="1014" y="612.4" width="2" height="0.8" fill="#8db255"/>
<rect x="1018" y="609.3" width="2" height="3.6" fill="#8db255"/>
<rect x="1023" y="609.0" width="2" height="3.9" fill="#8db255"/>
<rect x="1027" y="612.9" width="2" height="4.8" fill="#6c5a9c"/>
<rect x="1031" y="612.9" width="2" height="4.8" fill="#6c5a9c"/>
<rect x="1036" y="607.9" width="2" height="5.0" fill="#8db255"/>
<rect x="1040" y="612.9" width="2" height="2.7" fill="#6c5a9c"/>
<rect x="1045" y="612.9" width="2" height="15.5" fill="#6c5a9c"/>
<rect x="1049" y="609.7" width="2" height="3.2" fill="#8db255"/>
<rect x="1054" y="612.9" width="2" height="5.7" fill="#6c5a9c"/>
<rect x="1058" y="610.6" width="2" height="2.3" fill="#8db255"/>
<rect x="1062" y="599.9" width="2" height="13.0" fill="#8db255"/>
<rect x="1066" y="609.7" width="2" height="3.2" fill="#8db255"/>
<rect x="1071" y="606.3" width="2" height="6.6" fill="#8db255"/>
<rect x="1075" y="612.9" width="2" height="3.0" fill="#6c5a9c"/>
<rect x="1080" y="607.9" width="2" height="5.0" fill="#8db255"/>
<rect x="1084" y="612.9" width="2" height="0.8" fill="#6c5a9c"/>
<rect x="1089" y="612.9" width="2" height="3.0" fill="#6c5a9c"/>
<rect x="1093" y="610.6" width="2" height="2.3" fill="#8db255"/>
<rect x="1098" y="610.6" width="2" height="2.3" fill="#8db255"/>
<rect x="1106" y="607.2" width="2" height="5.7" fill="#8db255"/>
<rect x="1110" y="609.7" width="2" height="3.2" fill="#8db255"/>
<rect x="1115" y="599.9" width="2" height="13.0" fill="#8db255"/>
<rect x="1119" y="608.8" width="2" height="4.1" fill="#8db255"/>
<rect x="1124" y="608.8" width="2" height="4.1" fill="#8db255"/>
<rect x="1128" y="610.6" width="2" height="2.3" fill="#8db255"/>
<rect x="1132" y="612.9" width="2" height="2.1" fill="#6c5a9c"/>
<rect x="1137" y="612.9" width="2" height="0.8" fill="#6c5a9c"/>
<rect x="1141" y="610.6" width="2" height="2.3" fill="#8db255"/>
<rect x="1146" y="612.4" width="2" height="0.8" fill="#8db255"/>
<rect x="1150" y="609.7" width="2" height="3.2" fill="#8db255"/>
<rect x="1154" y="609.7" width="2" height="3.2" fill="#8db255"/>
<rect x="1159" y="612.9" width="2" height="0.8" fill="#6c5a9c"/>
<rect x="1167" y="612.9" width="2" height="5.7" fill="#6c5a9c"/>
<rect x="1172" y="612.9" width="2" height="1.3" fill="#6c5a9c"/>
<rect x="1177" y="605.2" width="2" height="7.7" fill="#8db255"/>
<rect x="1181" y="610.6" width="2" height="2.3" fill="#8db255"/>
<rect x="1185" y="598.1" width="2" height="14.8" fill="#8db255"/>
<rect x="1190" y="608.8" width="2" height="4.1" fill="#8db255"/>
<rect x="1194" y="608.8" width="2" height="4.1" fill="#8db255"/>
<rect x="1199" y="612.4" width="2" height="0.8" fill="#8db255"/>
<rect x="1203" y="612.9" width="2" height="5.7" fill="#6c5a9c"/>
<rect x="1207" y="608.8" width="2" height="4.1" fill="#8db255"/>
<rect x="1211" y="612.9" width="2" height="3.9" fill="#6c5a9c"/>
<rect x="1216" y="610.6" width="2" height="2.3" fill="#8db255"/>
<rect x="1225" y="612.9" width="2" height="0.8" fill="#6c5a9c"/>
<rect x="1229" y="605.2" width="2" height="7.7" fill="#8db255"/>
<rect x="1233" y="612.9" width="2" height="2.1" fill="#6c5a9c"/>
<rect x="1238" y="603.4" width="2" height="9.5" fill="#8db255"/>
<rect x="1242" y="608.8" width="2" height="4.1" fill="#8db255"/>
<rect x="1247" y="612.9" width="2" height="3.0" fill="#6c5a9c"/>
<rect x="1251" y="610.6" width="2" height="2.3" fill="#8db255"/>
<rect x="1255" y="612.9" width="2" height="3.9" fill="#6c5a9c"/>
<rect x="1260" y="612.9" width="2" height="2.1" fill="#6c5a9c"/>
<rect x="1264" y="605.2" width="2" height="7.7" fill="#8db255"/>
<rect x="1268" y="610.6" width="2" height="2.3" fill="#8db255"/>
<rect x="1273" y="612.9" width="2" height="7.5" fill="#6c5a9c"/>
<rect x="1277" y="612.9" width="2" height="2.1" fill="#6c5a9c"/>
<rect x="1282" y="612.9" width="2" height="8.4" fill="#6c5a9c"/>
<rect x="1286" y="612.4" width="2" height="0.8" fill="#8db255"/>
<rect x="1295" y="612.4" width="2" height="0.8" fill="#8db255"/>
<rect x="1299" y="607.9" width="2" height="5.0" fill="#8db255"/>
<rect x="1303" y="612.9" width="2" height="2.1" fill="#6c5a9c"/>
<rect x="1308" y="612.9" width="2" height="9.3" fill="#6c5a9c"/>
<rect x="1313" y="603.3" width="2" height="9.6" fill="#8db255"/>
<rect x="1317" y="610.9" width="2" height="2.0" fill="#8db255"/>
<rect x="1322" y="610.0" width="2" height="2.9" fill="#8db255"/>
<rect x="1326" y="603.3" width="2" height="9.6" fill="#8db255"/>
<rect x="1330" y="611.9" width="2" height="1.0" fill="#8db255"/>
<rect x="1334" y="612.9" width="2" height="3.5" fill="#6c5a9c"/>
<rect x="1338" y="612.9" width="2" height="2.6" fill="#6c5a9c"/>
<rect x="1343" y="612.9" width="2" height="7.5" fill="#6c5a9c"/>
<rect x="1348" y="612.1" width="2" height="0.8" fill="#8db255"/>
<rect x="1352" y="607.0" width="2" height="5.9" fill="#8db255"/>
<rect x="1357" y="610.0" width="2" height="2.9" fill="#8db255"/>
<rect x="1362" y="612.9" width="2" height="6.5" fill="#6c5a9c"/>
<rect x="1366" y="612.9" width="2" height="1.0" fill="#6c5a9c"/>
<rect x="1370" y="612.9" width="2" height="1.0" fill="#6c5a9c"/>
<rect x="1378" y="612.9" width="2" height="10.8" fill="#6c5a9c"/>
<rect x="1383" y="612.9" width="2" height="5.5" fill="#6c5a9c"/>
<rect x="1387" y="598.2" width="2" height="14.7" fill="#8db255"/>
<rect x="1392" y="607.0" width="2" height="5.9" fill="#8db255"/>
<rect x="1396" y="606.0" width="2" height="6.9" fill="#8db255"/>
<rect x="1401" y="611.9" width="2" height="1.0" fill="#8db255"/>
<rect x="1405" y="611.9" width="2" height="1.0" fill="#8db255"/>
<rect x="1413" y="610.0" width="2" height="2.9" fill="#8db255"/>
<rect x="1418" y="612.9" width="2" height="1.0" fill="#6c5a9c"/>
<rect x="1427" y="608.6" width="2" height="4.3" fill="#8db255"/>
<rect x="1436" y="612.9" width="2" height="2.6" fill="#6c5a9c"/>
<rect x="1440" y="609.6" width="2" height="3.3" fill="#8db255"/>
<rect x="1445" y="610.9" width="2" height="2.0" fill="#8db255"/>
<rect x="1449" y="612.9" width="2" height="2.0" fill="#6c5a9c"/>
<rect x="1453" y="611.9" width="2" height="1.0" fill="#8db255"/>
<rect x="1457" y="605.0" width="2" height="7.9" fill="#8db255"/>
<rect x="1462" y="610.0" width="2" height="2.9" fill="#8db255"/>
<rect x="1466" y="597.2" width="2" height="15.7" fill="#8db255"/>
<rect x="1471" y="610.0" width="2" height="2.9" fill="#8db255"/>
<rect x="1476" y="599.3" width="2" height="13.6" fill="#8db255"/>
<rect x="1479" y="612.9" width="2" height="3.5" fill="#6c5a9c"/>
<rect x="1484" y="612.9" width="2" height="7.9" fill="#6c5a9c"/>
<rect x="1488" y="607.0" width="2" height="5.9" fill="#8db255"/>
<rect x="1492" y="612.9" width="2" height="1.6" fill="#6c5a9c"/>
<rect x="1497" y="612.9" width="2" height="1.6" fill="#6c5a9c"/>
<rect x="1502" y="611.9" width="2" height="1.0" fill="#8db255"/>
<rect x="1507" y="610.9" width="2" height="2.0" fill="#8db255"/>
<rect x="1514" y="610.9" width="2" height="2.0" fill="#8db255"/>
<rect x="1519" y="611.9" width="2" height="1.0" fill="#8db255"/>
<rect x="1527" y="612.9" width="2" height="8.8" fill="#6c5a9c"/>
<rect x="1532" y="607.0" width="2" height="5.9" fill="#8db255"/>
<rect x="1537" y="609.6" width="2" height="3.3" fill="#8db255"/>
<rect x="1542" y="612.9" width="2" height="2.6" fill="#6c5a9c"/>
<rect x="1550" y="612.5" width="2" height="0.8" fill="#8db255"/>
<rect x="1554" y="612.9" width="2" height="7.5" fill="#6c5a9c"/>
<rect x="1563" y="612.9" width="2" height="6.5" fill="#6c5a9c"/>
<rect x="1567" y="610.1" width="2" height="2.8" fill="#8db255"/>
<rect x="1572" y="611.9" width="2" height="1.0" fill="#8db255"/>
<rect x="1576" y="612.9" width="2" height="2.0" fill="#6c5a9c"/>
<rect x="1581" y="605.0" width="2" height="7.9" fill="#8db255"/>
<rect x="1585" y="609.0" width="2" height="3.9" fill="#8db255"/>
<rect x="1589" y="610.9" width="2" height="2.0" fill="#8db255"/>
<rect x="1594" y="612.9" width="2" height="1.0" fill="#6c5a9c"/>
<rect x="1598" y="601.3" width="2" height="11.6" fill="#8db255"/>
<rect x="1607" y="611.1" width="2" height="1.8" fill="#8db255"/>
<rect x="1611" y="611.9" width="2" height="1.0" fill="#8db255"/>
<rect x="1616" y="612.9" width="2" height="4.5" fill="#6c5a9c"/>
<rect x="1621" y="612.9" width="2" height="6.5" fill="#6c5a9c"/>
<rect x="1625" y="610.1" width="2" height="2.8" fill="#8db255"/>
<rect x="1629" y="611.9" width="2" height="1.0" fill="#8db255"/>
</g>
<text x="1630.8" y="642.1" font-size="10.2" fill="#666" font-weight="normal" text-anchor="end" >&#8211;100</text>
<text transform="translate(1641,611.5) rotate(90)" font-size="10.3" fill="#666" text-anchor="middle" textLength="55.3" lengthAdjust="spacingAndGlyphs">Period P&amp;L</text>
<path d="M28,649.5 H1632" stroke="#e6e6e6" stroke-width="1"/>
<path d="M1632.5,649.5 V713.8" stroke="#ccd6eb" stroke-width="1"/>
<rect x="131" y="660.8" width="1498.7" height="52.9" fill="#f8ba88"/>
<path d="M131,713.3 H1629.7" stroke="#d9a47c" stroke-width="0.8"/>
<path d="M131,714.3 H1629.7" stroke="#b9d4ea" stroke-width="1"/>
<path d="M131.5,660.8 V713.5" stroke="#90ed7d" stroke-width="1"/>
<path d="M28,713.3 H131" stroke="#3a9ad6" stroke-width="1.5"/>
<text x="1631" y="712" font-size="10.2" fill="#666" font-weight="normal" text-anchor="end" >0</text>
<text transform="translate(1638.5,681.5) rotate(90)" font-size="10.3" fill="#666" text-anchor="middle" textLength="63" lengthAdjust="spacingAndGlyphs">vol/position</text>
<path d="M28,719.5 H1632" stroke="#e6e6e6" stroke-width="1"/>
<path d="M1632.5,719.5 V784.5" stroke="#ccd6eb" stroke-width="1"/>
<path d="M28,784.5 H1632" stroke="#ccd6eb" stroke-width="1"/>
<path d="M28,783.3 H131.5 V725.3 H1629.5" fill="none" stroke="#7b6d3c" stroke-width="1.1"/>
<text x="1631" y="782.2" font-size="10.2" fill="#666" font-weight="normal" text-anchor="end" >0</text>
<text transform="translate(1638.5,752) rotate(90)" font-size="10.3" fill="#666" text-anchor="middle" textLength="52.5" lengthAdjust="spacingAndGlyphs">utilization</text>
<path d="M61.5,784.4 V792.7" stroke="#ccd6eb" stroke-width="1"/>
<text x="42.5" y="801.1" font-size="10.5" fill="#666" font-weight="normal" text-anchor="start" >26.</text>
<path transform="translate(61.26,793.20) scale(0.8600)" d="M3.8,1.2Q3.6,6.4 0.6,9.4M6.0,1.2Q6.6,6.6 9.6,9.2" fill="none" stroke="#666" stroke-width="1.105" stroke-linecap="square"/>
<path transform="translate(71.46,793.20) scale(0.8600)" d="M2.2,0.9V5.8Q2.2,8.4 0.8,9.7M2.2,0.9H8V9.3Q8,9.7 6.8,9.5M2.2,3.9H8M2.2,6.4H8" fill="none" stroke="#666" stroke-width="1.105" stroke-linecap="square"/>
<path d="M122.5,784.4 V792.7" stroke="#ccd6eb" stroke-width="1"/>
<text x="107.0" y="801.1" font-size="10.5" fill="#666" font-weight="normal" text-anchor="start" >9.</text>
<path transform="translate(119.83,793.20) scale(0.8600)" d="M4,0.4Q3.9,6.6 0.6,9.6M0.9,3.6H6.3Q6.1,9.2 7.6,9.2H9.3V7.2" fill="none" stroke="#666" stroke-width="1.105" stroke-linecap="square"/>
<path transform="translate(130.03,793.20) scale(0.8600)" d="M2.2,0.9V5.8Q2.2,8.4 0.8,9.7M2.2,0.9H8V9.3Q8,9.7 6.8,9.5M2.2,3.9H8M2.2,6.4H8" fill="none" stroke="#666" stroke-width="1.105" stroke-linecap="square"/>
<path d="M184.5,784.4 V792.7" stroke="#ccd6eb" stroke-width="1"/>
<text x="165.5" y="801.1" font-size="10.5" fill="#666" font-weight="normal" text-anchor="start" >23.</text>
<path transform="translate(184.24,793.20) scale(0.8600)" d="M4,0.4Q3.9,6.6 0.6,9.6M0.9,3.6H6.3Q6.1,9.2 7.6,9.2H9.3V7.2" fill="none" stroke="#666" stroke-width="1.105" stroke-linecap="square"/>
<path transform="translate(194.44,793.20) scale(0.8600)" d="M2.2,0.9V5.8Q2.2,8.4 0.8,9.7M2.2,0.9H8V9.3Q8,9.7 6.8,9.5M2.2,3.9H8M2.2,6.4H8" fill="none" stroke="#666" stroke-width="1.105" stroke-linecap="square"/>
<path d="M245.5,784.4 V792.7" stroke="#ccd6eb" stroke-width="1"/>
<text x="229.9" y="801.1" font-size="10.5" fill="#666" font-weight="normal" text-anchor="start" >7.</text>
<path transform="translate(242.81,793.20) scale(0.8600)" d="M0.4,3.9H9.6M5,0.3V9.7" fill="none" stroke="#666" stroke-width="1.105" stroke-linecap="square"/>
<path transform="translate(253.01,793.20) scale(0.8600)" d="M2.2,0.9V5.8Q2.2,8.4 0.8,9.7M2.2,0.9H8V9.3Q8,9.7 6.8,9.5M2.2,3.9H8M2.2,6.4H8" fill="none" stroke="#666" stroke-width="1.105" stroke-linecap="square"/>
<path d="M307.5,784.4 V792.7" stroke="#ccd6eb" stroke-width="1"/>
<text x="288.5" y="801.1" font-size="10.5" fill="#666" font-weight="normal" text-anchor="start" >21.</text>
<path transform="translate(307.22,793.20) scale(0.8600)" d="M0.4,3.9H9.6M5,0.3V9.7" fill="none" stroke="#666" stroke-width="1.105" stroke-linecap="square"/>
<path transform="translate(317.42,793.20) scale(0.8600)" d="M2.2,0.9V5.8Q2.2,8.4 0.8,9.7M2.2,0.9H8V9.3Q8,9.7 6.8,9.5M2.2,3.9H8M2.2,6.4H8" fill="none" stroke="#666" stroke-width="1.105" stroke-linecap="square"/>
<path d="M368.5,784.4 V792.7" stroke="#ccd6eb" stroke-width="1"/>
<text x="347.8" y="801.1" font-size="10.5" fill="#666" font-weight="normal" text-anchor="start" >4.</text>
<path transform="translate(360.69,793.20) scale(0.8600)" d="M0.4,3.9H9.6M5,0.3V9.7" fill="none" stroke="#666" stroke-width="1.105" stroke-linecap="square"/>
<path transform="translate(370.89,793.20) scale(0.8600)" d="M0.6,5.2H9.4" fill="none" stroke="#666" stroke-width="1.105" stroke-linecap="square"/>
<path transform="translate(381.09,793.20) scale(0.8600)" d="M2.2,0.9V5.8Q2.2,8.4 0.8,9.7M2.2,0.9H8V9.3Q8,9.7 6.8,9.5M2.2,3.9H8M2.2,6.4H8" fill="none" stroke="#666" stroke-width="1.105" stroke-linecap="square"/>
<path d="M430.5,784.4 V792.7" stroke="#ccd6eb" stroke-width="1"/>
<text x="406.4" y="801.1" font-size="10.5" fill="#666" font-weight="normal" text-anchor="start" >18.</text>
<path transform="translate(425.10,793.20) scale(0.8600)" d="M0.4,3.9H9.6M5,0.3V9.7" fill="none" stroke="#666" stroke-width="1.105" stroke-linecap="square"/>
<path transform="translate(435.30,793.20) scale(0.8600)" d="M0.6,5.2H9.4" fill="none" stroke="#666" stroke-width="1.105" stroke-linecap="square"/>
<path transform="translate(445.50,793.20) scale(0.8600)" d="M2.2,0.9V5.8Q2.2,8.4 0.8,9.7M2.2,0.9H8V9.3Q8,9.7 6.8,9.5M2.2,3.9H8M2.2,6.4H8" fill="none" stroke="#666" stroke-width="1.105" stroke-linecap="square"/>
<path d="M491.5,784.4 V792.7" stroke="#ccd6eb" stroke-width="1"/>
<text x="470.8" y="801.1" font-size="10.5" fill="#666" font-weight="normal" text-anchor="start" >2.</text>
<path transform="translate(483.67,793.20) scale(0.8600)" d="M0.4,3.9H9.6M5,0.3V9.7" fill="none" stroke="#666" stroke-width="1.105" stroke-linecap="square"/>
<path transform="translate(493.87,793.20) scale(0.8600)" d="M1.6,2.2H8.4M0.6,8.4H9.4" fill="none" stroke="#666" stroke-width="1.105" stroke-linecap="square"/>
<path transform="translate(504.07,793.20) scale(0.8600)" d="M2.2,0.9V5.8Q2.2,8.4 0.8,9.7M2.2,0.9H8V9.3Q8,9.7 6.8,9.5M2.2,3.9H8M2.2,6.4H8" fill="none" stroke="#666" stroke-width="1.105" stroke-linecap="square"/>
<path d="M553.5,784.4 V792.7" stroke="#ccd6eb" stroke-width="1"/>
<text x="529.4" y="801.1" font-size="10.5" fill="#666" font-weight="normal" text-anchor="start" >16.</text>
<path transform="translate(548.08,793.20) scale(0.8600)" d="M0.4,3.9H9.6M5,0.3V9.7" fill="none" stroke="#666" stroke-width="1.105" stroke-linecap="square"/>
<path transform="translate(558.28,793.20) scale(0.8600)" d="M1.6,2.2H8.4M0.6,8.4H9.4" fill="none" stroke="#666" stroke-width="1.105" stroke-linecap="square"/>
<path transform="translate(568.48,793.20) scale(0.8600)" d="M2.2,0.9V5.8Q2.2,8.4 0.8,9.7M2.2,0.9H8V9.3Q8,9.7 6.8,9.5M2.2,3.9H8M2.2,6.4H8" fill="none" stroke="#666" stroke-width="1.105" stroke-linecap="square"/>
<path d="M614.5,784.4 V792.7" stroke="#ccd6eb" stroke-width="1"/>
<text x="590.8" y="801.1" font-size="10.5" fill="#666" font-weight="normal" text-anchor="start" >30.</text>
<path transform="translate(609.57,793.20) scale(0.8600)" d="M0.4,3.9H9.6M5,0.3V9.7" fill="none" stroke="#666" stroke-width="1.105" stroke-linecap="square"/>
<path transform="translate(619.77,793.20) scale(0.8600)" d="M1.6,2.2H8.4M0.6,8.4H9.4" fill="none" stroke="#666" stroke-width="1.105" stroke-linecap="square"/>
<path transform="translate(629.97,793.20) scale(0.8600)" d="M2.2,0.9V5.8Q2.2,8.4 0.8,9.7M2.2,0.9H8V9.3Q8,9.7 6.8,9.5M2.2,3.9H8M2.2,6.4H8" fill="none" stroke="#666" stroke-width="1.105" stroke-linecap="square"/>
<path d="M676.5,784.4 V792.7" stroke="#ccd6eb" stroke-width="1"/>
<text x="657.4" y="801.1" font-size="10.5" fill="#666" font-weight="normal" text-anchor="start" >13.</text>
<path transform="translate(676.16,793.20) scale(0.8600)" d="M0.6,5.2H9.4" fill="none" stroke="#666" stroke-width="1.105" stroke-linecap="square"/>
<path transform="translate(686.36,793.20) scale(0.8600)" d="M2.2,0.9V5.8Q2.2,8.4 0.8,9.7M2.2,0.9H8V9.3Q8,9.7 6.8,9.5M2.2,3.9H8M2.2,6.4H8" fill="none" stroke="#666" stroke-width="1.105" stroke-linecap="square"/>
<path d="M737.5,784.4 V792.7" stroke="#ccd6eb" stroke-width="1"/>
<text x="718.9" y="801.1" font-size="10.5" fill="#666" font-weight="normal" text-anchor="start" >27.</text>
<path transform="translate(737.65,793.20) scale(0.8600)" d="M0.6,5.2H9.4" fill="none" stroke="#666" stroke-width="1.105" stroke-linecap="square"/>
<path transform="translate(747.85,793.20) scale(0.8600)" d="M2.2,0.9V5.8Q2.2,8.4 0.8,9.7M2.2,0.9H8V9.3Q8,9.7 6.8,9.5M2.2,3.9H8M2.2,6.4H8" fill="none" stroke="#666" stroke-width="1.105" stroke-linecap="square"/>
<path d="M798.5,784.4 V792.7" stroke="#ccd6eb" stroke-width="1"/>
<text x="780.4" y="801.1" font-size="10.5" fill="#666" font-weight="normal" text-anchor="start" >10.</text>
<path transform="translate(799.14,793.20) scale(0.8600)" d="M1.6,2.2H8.4M0.6,8.4H9.4" fill="none" stroke="#666" stroke-width="1.105" stroke-linecap="square"/>
<path transform="translate(809.34,793.20) scale(0.8600)" d="M2.2,0.9V5.8Q2.2,8.4 0.8,9.7M2.2,0.9H8V9.3Q8,9.7 6.8,9.5M2.2,3.9H8M2.2,6.4H8" fill="none" stroke="#666" stroke-width="1.105" stroke-linecap="square"/>
<path d="M860.5,784.4 V792.7" stroke="#ccd6eb" stroke-width="1"/>
<text x="841.9" y="801.1" font-size="10.5" fill="#666" font-weight="normal" text-anchor="start" >24.</text>
<path transform="translate(860.63,793.20) scale(0.8600)" d="M1.6,2.2H8.4M0.6,8.4H9.4" fill="none" stroke="#666" stroke-width="1.105" stroke-linecap="square"/>
<path transform="translate(870.83,793.20) scale(0.8600)" d="M2.2,0.9V5.8Q2.2,8.4 0.8,9.7M2.2,0.9H8V9.3Q8,9.7 6.8,9.5M2.2,3.9H8M2.2,6.4H8" fill="none" stroke="#666" stroke-width="1.105" stroke-linecap="square"/>
<path d="M921.5,784.4 V792.7" stroke="#ccd6eb" stroke-width="1"/>
<text x="903.4" y="801.1" font-size="10.5" fill="#666" font-weight="normal" text-anchor="start" >10.</text>
<path transform="translate(922.12,793.20) scale(0.8600)" d="M1.4,1.4H8.6M2,5H8M0.6,8.8H9.4" fill="none" stroke="#666" stroke-width="1.105" stroke-linecap="square"/>
<path transform="translate(932.32,793.20) scale(0.8600)" d="M2.2,0.9V5.8Q2.2,8.4 0.8,9.7M2.2,0.9H8V9.3Q8,9.7 6.8,9.5M2.2,3.9H8M2.2,6.4H8" fill="none" stroke="#666" stroke-width="1.105" stroke-linecap="square"/>
<path d="M983.5,784.4 V792.7" stroke="#ccd6eb" stroke-width="1"/>
<text x="964.9" y="801.1" font-size="10.5" fill="#666" font-weight="normal" text-anchor="start" >24.</text>
<path transform="translate(983.61,793.20) scale(0.8600)" d="M1.4,1.4H8.6M2,5H8M0.6,8.8H9.4" fill="none" stroke="#666" stroke-width="1.105" stroke-linecap="square"/>
<path transform="translate(993.81,793.20) scale(0.8600)" d="M2.2,0.9V5.8Q2.2,8.4 0.8,9.7M2.2,0.9H8V9.3Q8,9.7 6.8,9.5M2.2,3.9H8M2.2,6.4H8" fill="none" stroke="#666" stroke-width="1.105" stroke-linecap="square"/>
<path d="M1044.5,784.4 V792.7" stroke="#ccd6eb" stroke-width="1"/>
<text x="1029.3" y="801.1" font-size="10.5" fill="#666" font-weight="normal" text-anchor="start" >7.</text>
<path transform="translate(1042.18,793.20) scale(0.8600)" d="M0.9,1.2V9.6M0.9,1.2H9.1V9.6M3.7,1.2Q3.7,5.2 2.4,6.4M6.1,1.2V5.4Q6.1,6.1 6.9,6.1H9.1M0.9,8.7H9.1" fill="none" stroke="#666" stroke-width="1.105" stroke-linecap="square"/>
<path transform="translate(1052.38,793.20) scale(0.8600)" d="M2.2,0.9V5.8Q2.2,8.4 0.8,9.7M2.2,0.9H8V9.3Q8,9.7 6.8,9.5M2.2,3.9H8M2.2,6.4H8" fill="none" stroke="#666" stroke-width="1.105" stroke-linecap="square"/>
<path d="M1106.5,784.4 V792.7" stroke="#ccd6eb" stroke-width="1"/>
<text x="1087.9" y="801.1" font-size="10.5" fill="#666" font-weight="normal" text-anchor="start" >21.</text>
<path transform="translate(1106.59,793.20) scale(0.8600)" d="M0.9,1.2V9.6M0.9,1.2H9.1V9.6M3.7,1.2Q3.7,5.2 2.4,6.4M6.1,1.2V5.4Q6.1,6.1 6.9,6.1H9.1M0.9,8.7H9.1" fill="none" stroke="#666" stroke-width="1.105" stroke-linecap="square"/>
<path transform="translate(1116.79,793.20) scale(0.8600)" d="M2.2,0.9V5.8Q2.2,8.4 0.8,9.7M2.2,0.9H8V9.3Q8,9.7 6.8,9.5M2.2,3.9H8M2.2,6.4H8" fill="none" stroke="#666" stroke-width="1.105" stroke-linecap="square"/>
<path d="M1167.5,784.4 V792.7" stroke="#ccd6eb" stroke-width="1"/>
<text x="1152.3" y="801.1" font-size="10.5" fill="#666" font-weight="normal" text-anchor="start" >5.</text>
<path transform="translate(1165.16,793.20) scale(0.8600)" d="M1.4,1.2H8.6M4.6,1.2L3.6,8.9M2.4,4.9H7.6V8.9M0.6,8.9H9.4" fill="none" stroke="#666" stroke-width="1.105" stroke-linecap="square"/>
<path transform="translate(1175.36,793.20) scale(0.8600)" d="M2.2,0.9V5.8Q2.2,8.4 0.8,9.7M2.2,0.9H8V9.3Q8,9.7 6.8,9.5M2.2,3.9H8M2.2,6.4H8" fill="none" stroke="#666" stroke-width="1.105" stroke-linecap="square"/>
<path d="M1229.5,784.4 V792.7" stroke="#ccd6eb" stroke-width="1"/>
<text x="1210.8" y="801.1" font-size="10.5" fill="#666" font-weight="normal" text-anchor="start" >19.</text>
<path transform="translate(1229.57,793.20) scale(0.8600)" d="M1.4,1.2H8.6M4.6,1.2L3.6,8.9M2.4,4.9H7.6V8.9M0.6,8.9H9.4" fill="none" stroke="#666" stroke-width="1.105" stroke-linecap="square"/>
<path transform="translate(1239.77,793.20) scale(0.8600)" d="M2.2,0.9V5.8Q2.2,8.4 0.8,9.7M2.2,0.9H8V9.3Q8,9.7 6.8,9.5M2.2,3.9H8M2.2,6.4H8" fill="none" stroke="#666" stroke-width="1.105" stroke-linecap="square"/>
<path d="M1290.5,784.4 V792.7" stroke="#ccd6eb" stroke-width="1"/>
<text x="1275.3" y="801.1" font-size="10.5" fill="#666" font-weight="normal" text-anchor="start" >2.</text>
<path transform="translate(1288.14,793.20) scale(0.8600)" d="M4.6,0.4L5.6,2.2M0.6,3.6H9.4M3.6,5.4L1.4,9.4M6.4,5.4L8.8,9.4" fill="none" stroke="#666" stroke-width="1.105" stroke-linecap="square"/>
<path transform="translate(1298.34,793.20) scale(0.8600)" d="M2.2,0.9V5.8Q2.2,8.4 0.8,9.7M2.2,0.9H8V9.3Q8,9.7 6.8,9.5M2.2,3.9H8M2.2,6.4H8" fill="none" stroke="#666" stroke-width="1.105" stroke-linecap="square"/>
<path d="M1352.5,784.4 V792.7" stroke="#ccd6eb" stroke-width="1"/>
<text x="1333.8" y="801.1" font-size="10.5" fill="#666" font-weight="normal" text-anchor="start" >16.</text>
<path transform="translate(1352.55,793.20) scale(0.8600)" d="M4.6,0.4L5.6,2.2M0.6,3.6H9.4M3.6,5.4L1.4,9.4M6.4,5.4L8.8,9.4" fill="none" stroke="#666" stroke-width="1.105" stroke-linecap="square"/>
<path transform="translate(1362.75,793.20) scale(0.8600)" d="M2.2,0.9V5.8Q2.2,8.4 0.8,9.7M2.2,0.9H8V9.3Q8,9.7 6.8,9.5M2.2,3.9H8M2.2,6.4H8" fill="none" stroke="#666" stroke-width="1.105" stroke-linecap="square"/>
<path d="M1413.5,784.4 V792.7" stroke="#ccd6eb" stroke-width="1"/>
<text x="1395.3" y="801.1" font-size="10.5" fill="#666" font-weight="normal" text-anchor="start" >30.</text>
<path transform="translate(1414.04,793.20) scale(0.8600)" d="M4.6,0.4L5.6,2.2M0.6,3.6H9.4M3.6,5.4L1.4,9.4M6.4,5.4L8.8,9.4" fill="none" stroke="#666" stroke-width="1.105" stroke-linecap="square"/>
<path transform="translate(1424.24,793.20) scale(0.8600)" d="M2.2,0.9V5.8Q2.2,8.4 0.8,9.7M2.2,0.9H8V9.3Q8,9.7 6.8,9.5M2.2,3.9H8M2.2,6.4H8" fill="none" stroke="#666" stroke-width="1.105" stroke-linecap="square"/>
<path d="M1475.5,784.4 V792.7" stroke="#ccd6eb" stroke-width="1"/>
<text x="1456.8" y="801.1" font-size="10.5" fill="#666" font-weight="normal" text-anchor="start" >14.</text>
<path transform="translate(1475.53,793.20) scale(0.8600)" d="M0.6,5.4L9.4,3.8M4.2,0.4V8.2Q4.2,9.2 5.4,9.2H9.2V7.4" fill="none" stroke="#666" stroke-width="1.105" stroke-linecap="square"/>
<path transform="translate(1485.73,793.20) scale(0.8600)" d="M2.2,0.9V5.8Q2.2,8.4 0.8,9.7M2.2,0.9H8V9.3Q8,9.7 6.8,9.5M2.2,3.9H8M2.2,6.4H8" fill="none" stroke="#666" stroke-width="1.105" stroke-linecap="square"/>
<path d="M1536.5,784.4 V792.7" stroke="#ccd6eb" stroke-width="1"/>
<text x="1518.3" y="801.1" font-size="10.5" fill="#666" font-weight="normal" text-anchor="start" >28.</text>
<path transform="translate(1537.02,793.20) scale(0.8600)" d="M0.6,5.4L9.4,3.8M4.2,0.4V8.2Q4.2,9.2 5.4,9.2H9.2V7.4" fill="none" stroke="#666" stroke-width="1.105" stroke-linecap="square"/>
<path transform="translate(1547.22,793.20) scale(0.8600)" d="M2.2,0.9V5.8Q2.2,8.4 0.8,9.7M2.2,0.9H8V9.3Q8,9.7 6.8,9.5M2.2,3.9H8M2.2,6.4H8" fill="none" stroke="#666" stroke-width="1.105" stroke-linecap="square"/>
<path d="M1598.5,784.4 V792.7" stroke="#ccd6eb" stroke-width="1"/>
<text x="1579.8" y="801.1" font-size="10.5" fill="#666" font-weight="normal" text-anchor="start" >11.</text>
<path transform="translate(1598.51,793.20) scale(0.8600)" d="M3.8,1.2Q3.6,6.4 0.6,9.4M6.0,1.2Q6.6,6.6 9.6,9.2" fill="none" stroke="#666" stroke-width="1.105" stroke-linecap="square"/>
<path transform="translate(1608.71,793.20) scale(0.8600)" d="M2.2,0.9V5.8Q2.2,8.4 0.8,9.7M2.2,0.9H8V9.3Q8,9.7 6.8,9.5M2.2,3.9H8M2.2,6.4H8" fill="none" stroke="#666" stroke-width="1.105" stroke-linecap="square"/>
<circle cx="484.2" cy="813.7" r="5.5" fill="#4572a7"/>
<text x="496.4" y="818" font-size="11.5" fill="#333" font-weight="bold" text-anchor="start" textLength="19.3" lengthAdjust="spacingAndGlyphs" >PnL</text>
<path d="M533.9,813.7 H548.3" stroke="#aa4643" stroke-width="1"/>
<text x="553.2" y="818" font-size="11.5" fill="#333" font-weight="bold" text-anchor="start" textLength="99" lengthAdjust="spacingAndGlyphs" >Benchmark return</text>
<circle cx="677.5" cy="813.7" r="5.5" fill="#434348"/>
<text x="689.8" y="818" font-size="11.5" fill="#333" font-weight="bold" text-anchor="start" textLength="59.4" lengthAdjust="spacingAndGlyphs" >Period P&amp;L</text>
<circle cx="774.5" cy="813.7" r="5.5" fill="#90ed7d"/>
<text x="786" y="818" font-size="11.5" fill="#333" font-weight="bold" text-anchor="start" textLength="54" lengthAdjust="spacingAndGlyphs" >Trade Vol</text>
<circle cx="864.6" cy="813.7" r="5.5" fill="#f7a35c"/>
<text x="876.5" y="818" font-size="11.5" fill="#333" font-weight="bold" text-anchor="start" textLength="72.7" lengthAdjust="spacingAndGlyphs" >Position long</text>
<circle cx="974.8" cy="813.7" r="5.5" fill="#8085e9"/>
<text x="986.7" y="818" font-size="11.5" fill="#333" font-weight="bold" text-anchor="start" textLength="78" lengthAdjust="spacingAndGlyphs" >Position short</text>
<path d="M1082.8,813.7 H1097.3" stroke="#8c7f4a" stroke-width="1"/>
<text x="1101.6" y="818" font-size="11.5" fill="#333" font-weight="bold" text-anchor="start" textLength="91" lengthAdjust="spacingAndGlyphs" >Asset utilization</text>
<rect x="27" y="825.3" width="1604.5" height="18.7" fill="#c9d5e5"/>
<path d="M27,825.8 H1631.5" stroke="#b9c3d0" stroke-width="1"/>
<path d="M27,843.8 H1631.5" stroke="#d8dde5" stroke-width="1"/>
<path d="M84.8,826 V844" stroke="#bfcbdc" stroke-width="1"/>
<path transform="translate(88.29,832.50) scale(0.8400)" d="M4,0.4Q3.9,6.6 0.6,9.6M0.9,3.6H6.3Q6.1,9.2 7.6,9.2H9.3V7.2" fill="none" stroke="#aab6c8" stroke-width="1.071" stroke-linecap="square"/>
<path transform="translate(98.29,832.50) scale(0.8400)" d="M2.2,0.9V5.8Q2.2,8.4 0.8,9.7M2.2,0.9H8V9.3Q8,9.7 6.8,9.5M2.2,3.9H8M2.2,6.4H8" fill="none" stroke="#aab6c8" stroke-width="1.071" stroke-linecap="square"/>
<text x="110.8" y="841" font-size="10.5" fill="#aab6c8" font-weight="normal" text-anchor="start" >'24</text>
<path d="M217.0,826 V844" stroke="#bfcbdc" stroke-width="1"/>
<path transform="translate(220.48,832.50) scale(0.8400)" d="M0.4,3.9H9.6M5,0.3V9.7" fill="none" stroke="#aab6c8" stroke-width="1.071" stroke-linecap="square"/>
<path transform="translate(230.48,832.50) scale(0.8400)" d="M2.2,0.9V5.8Q2.2,8.4 0.8,9.7M2.2,0.9H8V9.3Q8,9.7 6.8,9.5M2.2,3.9H8M2.2,6.4H8" fill="none" stroke="#aab6c8" stroke-width="1.071" stroke-linecap="square"/>
<text x="243.0" y="841" font-size="10.5" fill="#aab6c8" font-weight="normal" text-anchor="start" >'24</text>
<path d="M353.6,826 V844" stroke="#bfcbdc" stroke-width="1"/>
<path transform="translate(357.09,832.50) scale(0.8400)" d="M0.4,3.9H9.6M5,0.3V9.7" fill="none" stroke="#aab6c8" stroke-width="1.071" stroke-linecap="square"/>
<path transform="translate(367.09,832.50) scale(0.8400)" d="M0.6,5.2H9.4" fill="none" stroke="#aab6c8" stroke-width="1.071" stroke-linecap="square"/>
<path transform="translate(377.09,832.50) scale(0.8400)" d="M2.2,0.9V5.8Q2.2,8.4 0.8,9.7M2.2,0.9H8V9.3Q8,9.7 6.8,9.5M2.2,3.9H8M2.2,6.4H8" fill="none" stroke="#aab6c8" stroke-width="1.071" stroke-linecap="square"/>
<text x="389.6" y="841" font-size="10.5" fill="#aab6c8" font-weight="normal" text-anchor="start" >'24</text>
<path d="M485.8,826 V844" stroke="#bfcbdc" stroke-width="1"/>
<path transform="translate(489.29,832.50) scale(0.8400)" d="M0.4,3.9H9.6M5,0.3V9.7" fill="none" stroke="#aab6c8" stroke-width="1.071" stroke-linecap="square"/>
<path transform="translate(499.29,832.50) scale(0.8400)" d="M1.6,2.2H8.4M0.6,8.4H9.4" fill="none" stroke="#aab6c8" stroke-width="1.071" stroke-linecap="square"/>
<path transform="translate(509.29,832.50) scale(0.8400)" d="M2.2,0.9V5.8Q2.2,8.4 0.8,9.7M2.2,0.9H8V9.3Q8,9.7 6.8,9.5M2.2,3.9H8M2.2,6.4H8" fill="none" stroke="#aab6c8" stroke-width="1.071" stroke-linecap="square"/>
<text x="521.8" y="841" font-size="10.5" fill="#aab6c8" font-weight="normal" text-anchor="start" >'24</text>
<path d="M622.4,826 V844" stroke="#bfcbdc" stroke-width="1"/>
<path transform="translate(625.89,832.50) scale(0.8400)" d="M0.6,5.2H9.4" fill="none" stroke="#aab6c8" stroke-width="1.071" stroke-linecap="square"/>
<path transform="translate(635.89,832.50) scale(0.8400)" d="M2.2,0.9V5.8Q2.2,8.4 0.8,9.7M2.2,0.9H8V9.3Q8,9.7 6.8,9.5M2.2,3.9H8M2.2,6.4H8" fill="none" stroke="#aab6c8" stroke-width="1.071" stroke-linecap="square"/>
<text x="648.4" y="841" font-size="10.5" fill="#aab6c8" font-weight="normal" text-anchor="start" >'25</text>
<path d="M759.0,826 V844" stroke="#bfcbdc" stroke-width="1"/>
<path transform="translate(762.50,832.50) scale(0.8400)" d="M1.6,2.2H8.4M0.6,8.4H9.4" fill="none" stroke="#aab6c8" stroke-width="1.071" stroke-linecap="square"/>
<path transform="translate(772.50,832.50) scale(0.8400)" d="M2.2,0.9V5.8Q2.2,8.4 0.8,9.7M2.2,0.9H8V9.3Q8,9.7 6.8,9.5M2.2,3.9H8M2.2,6.4H8" fill="none" stroke="#aab6c8" stroke-width="1.071" stroke-linecap="square"/>
<text x="785.0" y="841" font-size="10.5" fill="#aab6c8" font-weight="normal" text-anchor="start" >'25</text>
<path d="M882.4,826 V844" stroke="#bfcbdc" stroke-width="1"/>
<path transform="translate(885.88,832.50) scale(0.8400)" d="M1.4,1.4H8.6M2,5H8M0.6,8.8H9.4" fill="none" stroke="#aab6c8" stroke-width="1.071" stroke-linecap="square"/>
<path transform="translate(895.88,832.50) scale(0.8400)" d="M2.2,0.9V5.8Q2.2,8.4 0.8,9.7M2.2,0.9H8V9.3Q8,9.7 6.8,9.5M2.2,3.9H8M2.2,6.4H8" fill="none" stroke="#aab6c8" stroke-width="1.071" stroke-linecap="square"/>
<text x="908.4" y="841" font-size="10.5" fill="#aab6c8" font-weight="normal" text-anchor="start" >'25</text>
<path d="M1019.0,826 V844" stroke="#bfcbdc" stroke-width="1"/>
<path transform="translate(1022.49,832.50) scale(0.8400)" d="M0.9,1.2V9.6M0.9,1.2H9.1V9.6M3.7,1.2Q3.7,5.2 2.4,6.4M6.1,1.2V5.4Q6.1,6.1 6.9,6.1H9.1M0.9,8.7H9.1" fill="none" stroke="#aab6c8" stroke-width="1.071" stroke-linecap="square"/>
<path transform="translate(1032.49,832.50) scale(0.8400)" d="M2.2,0.9V5.8Q2.2,8.4 0.8,9.7M2.2,0.9H8V9.3Q8,9.7 6.8,9.5M2.2,3.9H8M2.2,6.4H8" fill="none" stroke="#aab6c8" stroke-width="1.071" stroke-linecap="square"/>
<text x="1045.0" y="841" font-size="10.5" fill="#aab6c8" font-weight="normal" text-anchor="start" >'25</text>
<path d="M1151.2,826 V844" stroke="#bfcbdc" stroke-width="1"/>
<path transform="translate(1154.68,832.50) scale(0.8400)" d="M1.4,1.2H8.6M4.6,1.2L3.6,8.9M2.4,4.9H7.6V8.9M0.6,8.9H9.4" fill="none" stroke="#aab6c8" stroke-width="1.071" stroke-linecap="square"/>
<path transform="translate(1164.68,832.50) scale(0.8400)" d="M2.2,0.9V5.8Q2.2,8.4 0.8,9.7M2.2,0.9H8V9.3Q8,9.7 6.8,9.5M2.2,3.9H8M2.2,6.4H8" fill="none" stroke="#aab6c8" stroke-width="1.071" stroke-linecap="square"/>
<text x="1177.2" y="841" font-size="10.5" fill="#aab6c8" font-weight="normal" text-anchor="start" >'25</text>
<path d="M1287.8,826 V844" stroke="#bfcbdc" stroke-width="1"/>
<path transform="translate(1291.29,832.50) scale(0.8400)" d="M4.6,0.4L5.6,2.2M0.6,3.6H9.4M3.6,5.4L1.4,9.4M6.4,5.4L8.8,9.4" fill="none" stroke="#aab6c8" stroke-width="1.071" stroke-linecap="square"/>
<path transform="translate(1301.29,832.50) scale(0.8400)" d="M2.2,0.9V5.8Q2.2,8.4 0.8,9.7M2.2,0.9H8V9.3Q8,9.7 6.8,9.5M2.2,3.9H8M2.2,6.4H8" fill="none" stroke="#aab6c8" stroke-width="1.071" stroke-linecap="square"/>
<text x="1313.8" y="841" font-size="10.5" fill="#aab6c8" font-weight="normal" text-anchor="start" >'25</text>
<path d="M1420.0,826 V844" stroke="#bfcbdc" stroke-width="1"/>
<path transform="translate(1423.49,832.50) scale(0.8400)" d="M0.6,5.4L9.4,3.8M4.2,0.4V8.2Q4.2,9.2 5.4,9.2H9.2V7.4" fill="none" stroke="#aab6c8" stroke-width="1.071" stroke-linecap="square"/>
<path transform="translate(1433.49,832.50) scale(0.8400)" d="M2.2,0.9V5.8Q2.2,8.4 0.8,9.7M2.2,0.9H8V9.3Q8,9.7 6.8,9.5M2.2,3.9H8M2.2,6.4H8" fill="none" stroke="#aab6c8" stroke-width="1.071" stroke-linecap="square"/>
<text x="1446.0" y="841" font-size="10.5" fill="#aab6c8" font-weight="normal" text-anchor="start" >'25</text>
<path d="M1556.6,826 V844" stroke="#bfcbdc" stroke-width="1"/>
<path transform="translate(1560.09,832.50) scale(0.8400)" d="M3.8,1.2Q3.6,6.4 0.6,9.4M6.0,1.2Q6.6,6.6 9.6,9.2" fill="none" stroke="#aab6c8" stroke-width="1.071" stroke-linecap="square"/>
<path transform="translate(1570.09,832.50) scale(0.8400)" d="M2.2,0.9V5.8Q2.2,8.4 0.8,9.7M2.2,0.9H8V9.3Q8,9.7 6.8,9.5M2.2,3.9H8M2.2,6.4H8" fill="none" stroke="#aab6c8" stroke-width="1.071" stroke-linecap="square"/>
<text x="1582.6" y="841" font-size="10.5" fill="#aab6c8" font-weight="normal" text-anchor="start" >'25</text>
<rect x="23.8" y="827.4" width="7.6" height="14" rx="1.5" fill="#f2f2f2" stroke="#999" stroke-width="1"/>
<path d="M26.8,830.5 V838.5 M28.6,830.5 V838.5" stroke="#777" stroke-width="0.8"/>
<rect x="1627.3" y="827.4" width="7.6" height="14" rx="1.5" fill="#f2f2f2" stroke="#999" stroke-width="1"/>
<path d="M1630.3,830.5 V838.5 M1632.1,830.5 V838.5" stroke="#777" stroke-width="0.8"/>
<defs><filter id="sh" x="-50%" y="-50%" width="200%" height="200%"><feGaussianBlur stdDeviation="3"/></filter></defs>
<circle cx="1658" cy="804" r="18.5" fill="#000" fill-opacity="0.10" filter="url(#sh)"/>
<circle cx="1657.8" cy="802.9" r="18" fill="#fff"/>
<path d="M1652,797.6 H1664.5" stroke="#333" stroke-width="1.3"/>
<path d="M1658.2,800.5 V809" stroke="#333" stroke-width="1.4"/><path d="M1655.6,803.4 L1658.2,800.5 L1660.8,803.4" fill="none" stroke="#333" stroke-width="1.3"/>
<rect x="1067.5" y="406.5" width="211" height="105.8" rx="3" fill="none" stroke="#000" stroke-opacity="0.06" stroke-width="3"/>
<rect x="1066.5" y="405.5" width="211" height="105.8" rx="3" fill="#f7f7f7" fill-opacity="0.88" stroke="#6f8fbf" stroke-width="1"/>
<text x="1073.6" y="421" font-size="9.5" fill="#333" font-weight="normal" text-anchor="start" textLength="97.5" lengthAdjust="spacingAndGlyphs" >2025-06-02 00:00:00</text>
<circle cx="1076.1" cy="431.4" r="2.2" fill="#4572a7"/>
<text x="1082.9" y="435" font-size="11" fill="#333" font-weight="normal" text-anchor="start" textLength="118.4" lengthAdjust="spacingAndGlyphs" >PnL: <tspan font-weight="bold">440.0536</tspan> (8.80%)</text>
<circle cx="1076.1" cy="444.79999999999995" r="2.2" fill="#aa4643"/>
<text x="1082.9" y="448.4" font-size="11" fill="#333" font-weight="normal" text-anchor="start" textLength="139.1" lengthAdjust="spacingAndGlyphs" >Benchmark return: <tspan font-weight="bold">74.34%</tspan></text>
<circle cx="1076.1" cy="458.29999999999995" r="2.2" fill="#80699b"/>
<text x="1082.9" y="461.9" font-size="11" fill="#333" font-weight="normal" text-anchor="start" textLength="106" lengthAdjust="spacingAndGlyphs" >Period P&amp;L: <tspan font-weight="bold">&#8211;1.4068</tspan></text>
<circle cx="1076.1" cy="471.2" r="2.2" fill="#f7a35c"/>
<text x="1082.9" y="474.8" font-size="11" fill="#333" font-weight="normal" text-anchor="start" textLength="186.5" lengthAdjust="spacingAndGlyphs" >Position long: <tspan font-weight="bold">1</tspan> (BTC_USDT.swap:<tspan font-weight="bold">1</tspan>)</text>
<circle cx="1076.1" cy="485.2" r="2.2" fill="#8085e9"/>
<text x="1082.9" y="488.8" font-size="11" fill="#333" font-weight="normal" text-anchor="start" textLength="85.5" lengthAdjust="spacingAndGlyphs" >Position short: <tspan font-weight="bold">0</tspan></text>
<circle cx="1076.1" cy="498.5" r="2.2" fill="#5b4a12"/>
<text x="1082.9" y="502.1" font-size="11" fill="#333" font-weight="normal" text-anchor="start" textLength="123.5" lengthAdjust="spacingAndGlyphs" >Asset utilization: <tspan font-weight="bold">1.11%</tspan></text>
</svg>
</body></html>
